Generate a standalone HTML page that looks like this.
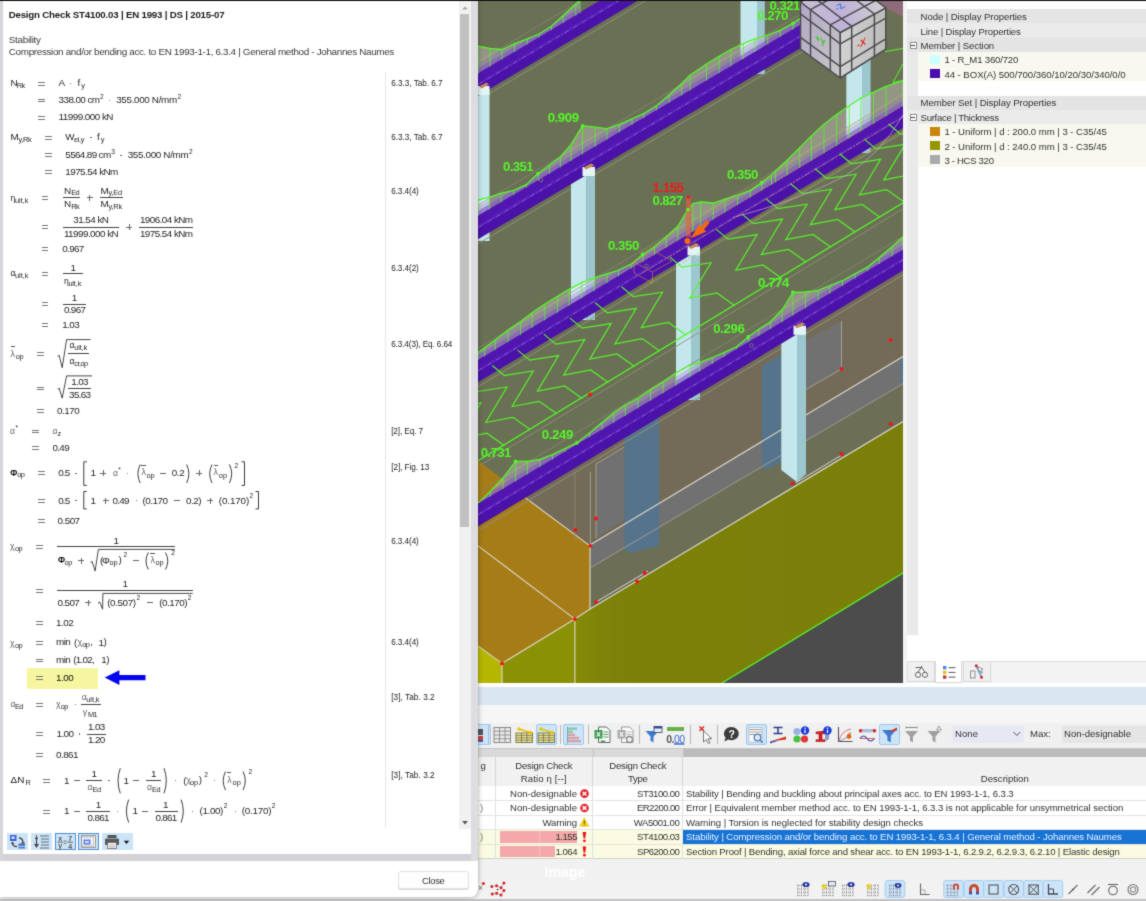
<!DOCTYPE html>
<html><head><meta charset="utf-8"><title>RFEM</title>
<style>
html,body{margin:0;padding:0;}
body{width:1146px;height:901px;overflow:hidden;position:relative;background:#f3f3f3;font-family:"Liberation Sans",sans-serif;}
#all{position:absolute;left:0;top:0;width:1146px;height:901px;overflow:hidden;filter:url(#softblur);}
.t{position:absolute;white-space:pre;line-height:1;font-family:"Liberation Sans",sans-serif;}
.r{position:absolute;}
svg{position:absolute;overflow:hidden;}
svg text{font-family:"Liberation Sans",sans-serif;}
</style></head><body><svg width="0" height="0" style="position:absolute"><defs><filter id="softblur" x="0" y="0" width="100%" height="100%" color-interpolation-filters="sRGB"><feConvolveMatrix order="3" kernelMatrix="0.025 0.085 0.025 0.085 0.56 0.085 0.025 0.085 0.025" edgeMode="duplicate" preserveAlpha="true"/></filter></defs></svg><div id="all">
<!-- view3d -->
<svg class="r" style="left:0;top:0" width="1146" height="901" viewBox="0 0 1146 901"><defs><linearGradient id="gol" x1="0" y1="0" x2="1" y2="0"><stop offset="0" stop-color="#858a07"/><stop offset="0.12" stop-color="#7c810a"/><stop offset="1" stop-color="#7a7f0a"/></linearGradient><linearGradient id="gcl" x1="0" y1="0" x2="1" y2="1"><stop offset="0" stop-color="#b3a7c8"/><stop offset="0.55" stop-color="#bdb8c6"/><stop offset="1" stop-color="#c9c9c9"/></linearGradient><linearGradient id="gcr" x1="0" y1="0" x2="1" y2="0"><stop offset="0" stop-color="#d2d2d2"/><stop offset="1" stop-color="#bcbcbc"/></linearGradient><linearGradient id="gct" x1="0" y1="0" x2="1" y2="0"><stop offset="0" stop-color="#c6c0d2"/><stop offset="0.5" stop-color="#bfb2d8"/><stop offset="1" stop-color="#d2d2d2"/></linearGradient><clipPath id="cv"><rect x="478" y="1" width="425" height="682"/></clipPath></defs><g clip-path="url(#cv)"><rect x="478" y="0" width="425" height="683" fill="#6a7054"/><polygon points="519.0,494.0 903.0,262.0 903.0,430.0 590.0,612.0 590.0,546.0" fill="#736b58" /><polygon points="590.0,545.0 903.0,356.5 903.0,383.7 690.0,509.0 590.0,568.0" fill="#717171" /><polygon points="590.0,568.0 690.0,509.0 903.0,383.7 903.0,421.6 590.0,609.0" fill="#6c6e56" /><polygon points="806.0,340.0 841.5,321.0 841.5,369.0 806.0,389.5" fill="#717171" /><polygon points="596.0,464.0 624.0,447.0 624.0,520.0 596.0,538.0" fill="#717171" /><polygon points="762.0,366.0 781.0,355.0 781.0,462.0 766.0,470.0 762.0,466.0" fill="#55748b" /><polygon points="624.4,432.0 659.3,411.0 659.3,546.0 629.0,553.0 624.4,549.0" fill="#55748b" /><polygon points="900.5,359.0 903.0,358.0 903.0,383.0 900.5,384.0" fill="#55748b" /><polygon points="478.0,460.4 502.0,478.8 519.5,493.4 590.0,545.9 590.0,609.0 574.9,619.1 502.0,663.4 478.0,645.9" fill="#a67c17" /><polygon points="478.0,645.9 502.0,663.4 502.0,683.0 478.0,683.0" fill="#b4b600" /><polygon points="502.0,663.4 574.9,619.1 574.9,683.0 502.0,683.0" fill="#8b9105" /><polygon points="574.9,619.1 590.0,609.0 903.0,421.6 903.0,573.0 722.0,683.0 574.9,683.0" fill="url(#gol)" /><polygon points="722.0,683.0 903.0,573.0 903.0,683.0" fill="#4c4c4c" /><line x1="722.0" y1="683.0" x2="903.0" y2="573.0" stroke="#55f52a" stroke-width="1.20" /><line x1="478.0" y1="545.9" x2="574.9" y2="619.1" stroke="#dad6c8" stroke-width="1.15" /><line x1="502.0" y1="663.4" x2="502.0" y2="683.0" stroke="#dad6c8" stroke-width="1.15" /><line x1="574.9" y1="619.1" x2="574.9" y2="683.0" stroke="#dad6c8" stroke-width="1.15" /><polyline points="478.0,645.9 502.0,663.4 574.9,619.1 590.0,609.0 903.0,421.6" fill="none" stroke="#dad6c8" stroke-width="1.15" /><line x1="590.0" y1="545.9" x2="590.0" y2="609.0" stroke="#dad6c8" stroke-width="1.15" /><line x1="519.5" y1="493.4" x2="590.0" y2="545.9" stroke="#dad6c8" stroke-width="1.15" /><line x1="590.0" y1="545.0" x2="903.0" y2="356.5" stroke="#dad6c8" stroke-width="1.15" /><line x1="590.0" y1="568.0" x2="690.0" y2="509.0" stroke="#a8a8a0" stroke-width="0.80" /><line x1="690.0" y1="509.0" x2="903.0" y2="383.7" stroke="#a8a8a0" stroke-width="0.80" /><line x1="574.9" y1="472.0" x2="574.9" y2="540.0" stroke="#908a7a" stroke-width="0.80" /><line x1="590.4" y1="472.0" x2="590.4" y2="546.0" stroke="#b0aca0" stroke-width="0.80" /><polyline points="806.0,389.5 841.5,369.0 841.5,321.0" fill="none" stroke="#b0aca0" stroke-width="0.80" /><polyline points="596.0,538.0 596.0,464.0 624.0,447.0" fill="none" stroke="#b0aca0" stroke-width="0.80" /><line x1="596.0" y1="602.0" x2="648.0" y2="571.0" stroke="#dad6c8" stroke-width="1.00" /><line x1="796.0" y1="482.7" x2="842.4" y2="454.6" stroke="#dad6c8" stroke-width="1.00" /><polygon points="740.5,0.0 757.0,0.0 757.0,74.0 740.5,74.0" fill="#c3e7ec" /><polygon points="757.0,0.0 764.8,0.0 764.8,74.0 757.0,74.0" fill="#9cc7cf" /><polygon points="470.0,78.1 645.0,-26.2 645.0,-3.6 470.0,100.7" fill="#4a12a8" /><polygon points="470.0,78.1 645.0,-26.2 645.0,-17.6 470.0,86.7" fill="#5216b0" /><polygon points="470.0,86.7 645.0,-17.6 645.0,-13.8 470.0,90.5" fill="#581cb8" /><line x1="470.0" y1="89.4" x2="645.0" y2="-14.9" stroke="#b9a6e6" stroke-width="0.70" stroke-dasharray="5 2 1 2" opacity="0.7"/><line x1="470.0" y1="105.2" x2="645.0" y2="0.9" stroke="#8f917c" stroke-width="1.00" /><line x1="470.0" y1="66.7" x2="645.0" y2="-37.6" stroke="#83866e" stroke-width="0.90" /><polygon points="478.0,46.1 490.0,48.3 502.0,49.5 514.7,43.7 527.3,38.8 539.0,34.0 551.5,26.2 563.2,15.5 575.8,3.9 580.0,0.0 580.0,12.5 575.8,15.0 563.2,22.5 551.5,29.5 539.0,36.9 527.3,43.9 514.7,51.4 502.0,59.0 490.0,66.1 478.0,73.3" fill="#ffffff" opacity="0.27"/><polygon points="478.0,64.3 490.0,57.1 502.0,50.0 514.7,43.7 527.3,38.8 539.0,34.0 551.5,26.2 563.2,15.5 575.8,6.0 580.0,3.5 580.0,12.5 575.8,15.0 563.2,22.5 551.5,29.5 539.0,36.9 527.3,43.9 514.7,51.4 502.0,59.0 490.0,66.1 478.0,73.3" fill="#9070c8" opacity="0.32"/><polygon points="478.0,68.8 490.0,61.6 502.0,54.5 514.7,46.9 527.3,39.4 539.0,34.0 551.5,26.2 563.2,18.0 575.8,10.5 580.0,8.0 580.0,12.5 575.8,15.0 563.2,22.5 551.5,29.5 539.0,36.9 527.3,43.9 514.7,51.4 502.0,59.0 490.0,66.1 478.0,73.3" fill="#7e56c0" opacity="0.60"/><polyline points="478.0,46.1 490.0,48.3 502.0,49.5 514.7,43.7 527.3,38.8 539.0,34.0 551.5,26.2 563.2,15.5 575.8,3.9 580.0,0.0" fill="none" stroke="#55f52a" stroke-width="1.30" /><line x1="478.0" y1="46.1" x2="478.0" y2="73.8" stroke="#55f52a" stroke-width="1.00" opacity="0.8"/><line x1="490.0" y1="48.3" x2="490.0" y2="66.6" stroke="#55f52a" stroke-width="1.00" opacity="0.8"/><line x1="502.0" y1="49.5" x2="502.0" y2="59.5" stroke="#55f52a" stroke-width="1.00" opacity="0.8"/><line x1="514.7" y1="43.7" x2="514.7" y2="51.9" stroke="#55f52a" stroke-width="1.00" opacity="0.8"/><line x1="527.3" y1="38.8" x2="527.3" y2="44.4" stroke="#55f52a" stroke-width="1.00" opacity="0.8"/><line x1="539.0" y1="34.0" x2="539.0" y2="37.4" stroke="#55f52a" stroke-width="1.00" opacity="0.8"/><line x1="551.5" y1="26.2" x2="551.5" y2="30.0" stroke="#55f52a" stroke-width="1.00" opacity="0.8"/><line x1="563.2" y1="15.5" x2="563.2" y2="23.0" stroke="#55f52a" stroke-width="1.00" opacity="0.8"/><line x1="575.8" y1="3.9" x2="575.8" y2="15.5" stroke="#55f52a" stroke-width="1.00" opacity="0.8"/><line x1="580.0" y1="0.0" x2="580.0" y2="13.0" stroke="#55f52a" stroke-width="1.00" opacity="0.8"/><polygon points="478.0,95.9 489.5,89.0 489.5,241.0 478.0,241.0" fill="#c3e7ec" /><rect x="478.0" y="86.0" width="11.5" height="9.0" fill="#e2f4f6"/><polygon points="479.0,86.5 486.5,82.5 489.0,84.5 481.5,88.5" fill="#c98a55" /><polygon points="846.3,20.0 862.0,20.0 862.0,153.0 846.3,153.0" fill="#c3e7ec" /><polygon points="862.0,20.0 870.6,20.0 870.6,153.0 862.0,153.0" fill="#9cc7cf" /><polygon points="470.0,220.3 810.0,18.9 810.0,42.6 470.0,244.0" fill="#4a12a8" /><polygon points="470.0,220.3 810.0,18.9 810.0,27.9 470.0,229.3" fill="#5216b0" /><polygon points="470.0,229.3 810.0,27.9 810.0,31.9 470.0,233.4" fill="#581cb8" /><line x1="470.0" y1="232.2" x2="810.0" y2="30.7" stroke="#b9a6e6" stroke-width="0.70" stroke-dasharray="5 2 1 2" opacity="0.7"/><line x1="470.0" y1="248.5" x2="810.0" y2="47.1" stroke="#8f917c" stroke-width="1.00" /><line x1="470.0" y1="210.0" x2="810.0" y2="8.6" stroke="#83866e" stroke-width="0.90" /><polygon points="478.0,200.0 489.4,197.2 501.0,193.3 513.7,190.4 526.3,184.6 538.0,173.6 549.6,165.0 560.3,156.9 571.0,144.7 582.6,125.8 595.2,127.2 606.9,128.7 619.5,124.3 632.1,118.8 643.8,113.6 656.4,105.8 669.0,95.1 681.7,83.5 690.0,75.3 706.5,64.0 719.1,56.3 730.8,49.5 743.4,43.7 755.0,38.8 767.7,35.0 780.3,30.1 793.0,23.3 800.0,18.4 800.0,24.8 793.0,29.0 780.3,36.5 767.7,44.0 755.0,51.5 743.4,58.4 730.8,65.8 719.1,72.7 706.5,80.2 690.0,90.0 681.7,94.9 669.0,102.4 656.4,109.9 643.8,117.4 632.1,124.3 619.5,131.8 606.9,139.2 595.2,146.2 582.6,153.6 571.0,160.5 560.3,166.8 549.6,173.2 538.0,180.1 526.3,187.0 513.7,194.4 501.0,202.0 489.4,208.8 478.0,215.6" fill="#ffffff" opacity="0.27"/><polygon points="478.0,206.6 489.4,199.8 501.0,193.3 513.7,190.4 526.3,184.6 538.0,173.6 549.6,165.0 560.3,157.8 571.0,151.5 582.6,144.6 595.2,137.2 606.9,130.2 619.5,124.3 632.1,118.8 643.8,113.6 656.4,105.8 669.0,95.1 681.7,85.9 690.0,81.0 706.5,71.2 719.1,63.7 730.8,56.8 743.4,49.4 755.0,42.5 767.7,35.0 780.3,30.1 793.0,23.3 800.0,18.4 800.0,24.8 793.0,29.0 780.3,36.5 767.7,44.0 755.0,51.5 743.4,58.4 730.8,65.8 719.1,72.7 706.5,80.2 690.0,90.0 681.7,94.9 669.0,102.4 656.4,109.9 643.8,117.4 632.1,124.3 619.5,131.8 606.9,139.2 595.2,146.2 582.6,153.6 571.0,160.5 560.3,166.8 549.6,173.2 538.0,180.1 526.3,187.0 513.7,194.4 501.0,202.0 489.4,208.8 478.0,215.6" fill="#9070c8" opacity="0.32"/><polygon points="478.0,211.1 489.4,204.3 501.0,197.5 513.7,190.4 526.3,184.6 538.0,175.6 549.6,168.7 560.3,162.3 571.0,156.0 582.6,149.1 595.2,141.7 606.9,134.7 619.5,127.3 632.1,119.8 643.8,113.6 656.4,105.8 669.0,97.9 681.7,90.4 690.0,85.5 706.5,75.7 719.1,68.2 730.8,61.3 743.4,53.9 755.0,47.0 767.7,39.5 780.3,32.0 793.0,24.5 800.0,20.3 800.0,24.8 793.0,29.0 780.3,36.5 767.7,44.0 755.0,51.5 743.4,58.4 730.8,65.8 719.1,72.7 706.5,80.2 690.0,90.0 681.7,94.9 669.0,102.4 656.4,109.9 643.8,117.4 632.1,124.3 619.5,131.8 606.9,139.2 595.2,146.2 582.6,153.6 571.0,160.5 560.3,166.8 549.6,173.2 538.0,180.1 526.3,187.0 513.7,194.4 501.0,202.0 489.4,208.8 478.0,215.6" fill="#7e56c0" opacity="0.60"/><polyline points="478.0,200.0 489.4,197.2 501.0,193.3 513.7,190.4 526.3,184.6 538.0,173.6 549.6,165.0 560.3,156.9 571.0,144.7 582.6,125.8 595.2,127.2 606.9,128.7 619.5,124.3 632.1,118.8 643.8,113.6 656.4,105.8 669.0,95.1 681.7,83.5 690.0,75.3 706.5,64.0 719.1,56.3 730.8,49.5 743.4,43.7 755.0,38.8 767.7,35.0 780.3,30.1 793.0,23.3 800.0,18.4" fill="none" stroke="#55f52a" stroke-width="1.30" /><line x1="478.0" y1="200.0" x2="478.0" y2="216.1" stroke="#55f52a" stroke-width="1.00" opacity="0.8"/><line x1="489.4" y1="197.2" x2="489.4" y2="209.3" stroke="#55f52a" stroke-width="1.00" opacity="0.8"/><line x1="501.0" y1="193.3" x2="501.0" y2="202.5" stroke="#55f52a" stroke-width="1.00" opacity="0.8"/><line x1="513.7" y1="190.4" x2="513.7" y2="194.9" stroke="#55f52a" stroke-width="1.00" opacity="0.8"/><line x1="526.3" y1="184.6" x2="526.3" y2="187.5" stroke="#55f52a" stroke-width="1.00" opacity="0.8"/><line x1="538.0" y1="173.6" x2="538.0" y2="180.6" stroke="#55f52a" stroke-width="1.00" opacity="0.8"/><line x1="549.6" y1="165.0" x2="549.6" y2="173.7" stroke="#55f52a" stroke-width="1.00" opacity="0.8"/><line x1="560.3" y1="156.9" x2="560.3" y2="167.3" stroke="#55f52a" stroke-width="1.00" opacity="0.8"/><line x1="571.0" y1="144.7" x2="571.0" y2="161.0" stroke="#55f52a" stroke-width="1.00" opacity="0.8"/><line x1="582.6" y1="125.8" x2="582.6" y2="154.1" stroke="#55f52a" stroke-width="1.00" opacity="0.8"/><line x1="595.2" y1="127.2" x2="595.2" y2="146.7" stroke="#55f52a" stroke-width="1.00" opacity="0.8"/><line x1="606.9" y1="128.7" x2="606.9" y2="139.7" stroke="#55f52a" stroke-width="1.00" opacity="0.8"/><line x1="619.5" y1="124.3" x2="619.5" y2="132.3" stroke="#55f52a" stroke-width="1.00" opacity="0.8"/><line x1="632.1" y1="118.8" x2="632.1" y2="124.8" stroke="#55f52a" stroke-width="1.00" opacity="0.8"/><line x1="643.8" y1="113.6" x2="643.8" y2="117.9" stroke="#55f52a" stroke-width="1.00" opacity="0.8"/><line x1="656.4" y1="105.8" x2="656.4" y2="110.4" stroke="#55f52a" stroke-width="1.00" opacity="0.8"/><line x1="669.0" y1="95.1" x2="669.0" y2="102.9" stroke="#55f52a" stroke-width="1.00" opacity="0.8"/><line x1="681.7" y1="83.5" x2="681.7" y2="95.4" stroke="#55f52a" stroke-width="1.00" opacity="0.8"/><line x1="690.0" y1="75.3" x2="690.0" y2="90.5" stroke="#55f52a" stroke-width="1.00" opacity="0.8"/><line x1="706.5" y1="64.0" x2="706.5" y2="80.7" stroke="#55f52a" stroke-width="1.00" opacity="0.8"/><line x1="719.1" y1="56.3" x2="719.1" y2="73.2" stroke="#55f52a" stroke-width="1.00" opacity="0.8"/><line x1="730.8" y1="49.5" x2="730.8" y2="66.3" stroke="#55f52a" stroke-width="1.00" opacity="0.8"/><line x1="743.4" y1="43.7" x2="743.4" y2="58.9" stroke="#55f52a" stroke-width="1.00" opacity="0.8"/><line x1="755.0" y1="38.8" x2="755.0" y2="52.0" stroke="#55f52a" stroke-width="1.00" opacity="0.8"/><line x1="767.7" y1="35.0" x2="767.7" y2="44.5" stroke="#55f52a" stroke-width="1.00" opacity="0.8"/><line x1="780.3" y1="30.1" x2="780.3" y2="37.0" stroke="#55f52a" stroke-width="1.00" opacity="0.8"/><line x1="793.0" y1="23.3" x2="793.0" y2="29.5" stroke="#55f52a" stroke-width="1.00" opacity="0.8"/><line x1="800.0" y1="18.4" x2="800.0" y2="25.3" stroke="#55f52a" stroke-width="1.00" opacity="0.8"/><polygon points="571.0,184.2 586.5,175.0 586.5,320.0 571.0,320.0" fill="#c3e7ec" /><polygon points="586.5,175.0 595.0,170.0 595.0,320.0 586.5,320.0" fill="#9cc7cf" /><rect x="582.5" y="167.0" width="12.5" height="9.0" fill="#e2f4f6"/><polygon points="583.5,167.5 591.0,163.5 594.5,165.5 586.0,169.5" fill="#c98a55" /><polygon points="470.0,364.5 910.0,101.4 910.0,123.9 470.0,387.0" fill="#4a12a8" /><polygon points="470.0,364.5 910.0,101.4 910.0,109.9 470.0,373.0" fill="#5216b0" /><polygon points="470.0,373.0 910.0,109.9 910.0,113.7 470.0,376.9" fill="#581cb8" /><line x1="470.0" y1="375.7" x2="910.0" y2="112.6" stroke="#b9a6e6" stroke-width="0.70" stroke-dasharray="5 2 1 2" opacity="0.7"/><line x1="470.0" y1="391.5" x2="910.0" y2="128.4" stroke="#8f917c" stroke-width="1.00" /><line x1="470.0" y1="353.0" x2="910.0" y2="89.9" stroke="#83866e" stroke-width="0.90" /><polygon points="478.0,352.6 484.6,347.8 495.2,340.0 507.9,330.2 520.5,321.5 532.1,312.7 544.8,304.0 557.4,296.2 569.0,289.4 581.7,282.6 594.3,277.8 606.9,273.9 618.5,270.0 631.2,264.2 642.8,254.5 654.5,246.7 666.1,237.0 677.8,226.3 688.0,209.7 693.0,203.5 700.7,202.0 713.3,203.0 725.0,199.1 737.6,195.2 750.2,190.4 761.8,182.6 771.5,175.0 775.4,170.9 787.1,160.2 799.7,147.6 811.4,135.9 824.0,124.3 836.6,114.6 849.2,105.8 860.9,98.0 873.5,92.2 886.1,86.4 903.0,80.6 903.0,105.6 886.1,115.7 873.5,123.2 860.9,130.7 849.2,137.7 836.6,145.3 824.0,152.8 811.4,160.3 799.7,167.3 787.1,174.9 775.4,181.9 771.5,184.2 761.8,190.0 750.2,196.9 737.6,204.5 725.0,212.0 713.3,219.0 700.7,226.5 693.0,231.1 688.0,234.1 677.8,240.2 666.1,247.2 654.5,254.2 642.8,261.1 631.2,268.1 618.5,275.7 606.9,282.6 594.3,290.2 581.7,297.7 569.0,305.3 557.4,312.2 544.8,319.8 532.1,327.3 520.5,334.3 507.9,341.8 495.2,349.4 484.6,355.8 478.0,359.7" fill="#ffffff" opacity="0.27"/><polygon points="478.0,352.6 484.6,347.8 495.2,340.4 507.9,332.8 520.5,325.3 532.1,318.3 544.8,310.8 557.4,303.2 569.0,296.3 581.7,288.7 594.3,281.2 606.9,273.9 618.5,270.0 631.2,264.2 642.8,254.5 654.5,246.7 666.1,238.2 677.8,231.2 688.0,225.1 693.0,222.1 700.7,217.5 713.3,210.0 725.0,203.0 737.6,195.5 750.2,190.4 761.8,182.6 771.5,175.2 775.4,172.9 787.1,165.9 799.7,158.3 811.4,151.3 824.0,143.8 836.6,136.3 849.2,128.7 860.9,121.7 873.5,114.2 886.1,106.7 903.0,96.6 903.0,105.6 886.1,115.7 873.5,123.2 860.9,130.7 849.2,137.7 836.6,145.3 824.0,152.8 811.4,160.3 799.7,167.3 787.1,174.9 775.4,181.9 771.5,184.2 761.8,190.0 750.2,196.9 737.6,204.5 725.0,212.0 713.3,219.0 700.7,226.5 693.0,231.1 688.0,234.1 677.8,240.2 666.1,247.2 654.5,254.2 642.8,261.1 631.2,268.1 618.5,275.7 606.9,282.6 594.3,290.2 581.7,297.7 569.0,305.3 557.4,312.2 544.8,319.8 532.1,327.3 520.5,334.3 507.9,341.8 495.2,349.4 484.6,355.8 478.0,359.7" fill="#9070c8" opacity="0.32"/><polygon points="478.0,355.2 484.6,351.3 495.2,344.9 507.9,337.3 520.5,329.8 532.1,322.8 544.8,315.3 557.4,307.7 569.0,300.8 581.7,293.2 594.3,285.7 606.9,278.1 618.5,271.2 631.2,264.2 642.8,256.6 654.5,249.7 666.1,242.7 677.8,235.7 688.0,229.6 693.0,226.6 700.7,222.0 713.3,214.5 725.0,207.5 737.6,200.0 750.2,192.4 761.8,185.5 771.5,179.7 775.4,177.4 787.1,170.4 799.7,162.8 811.4,155.8 824.0,148.3 836.6,140.8 849.2,133.2 860.9,126.2 873.5,118.7 886.1,111.2 903.0,101.1 903.0,105.6 886.1,115.7 873.5,123.2 860.9,130.7 849.2,137.7 836.6,145.3 824.0,152.8 811.4,160.3 799.7,167.3 787.1,174.9 775.4,181.9 771.5,184.2 761.8,190.0 750.2,196.9 737.6,204.5 725.0,212.0 713.3,219.0 700.7,226.5 693.0,231.1 688.0,234.1 677.8,240.2 666.1,247.2 654.5,254.2 642.8,261.1 631.2,268.1 618.5,275.7 606.9,282.6 594.3,290.2 581.7,297.7 569.0,305.3 557.4,312.2 544.8,319.8 532.1,327.3 520.5,334.3 507.9,341.8 495.2,349.4 484.6,355.8 478.0,359.7" fill="#7e56c0" opacity="0.60"/><polyline points="478.0,352.6 484.6,347.8 495.2,340.0 507.9,330.2 520.5,321.5 532.1,312.7 544.8,304.0 557.4,296.2 569.0,289.4 581.7,282.6 594.3,277.8 606.9,273.9 618.5,270.0 631.2,264.2 642.8,254.5 654.5,246.7 666.1,237.0 677.8,226.3 688.0,209.7 693.0,203.5 700.7,202.0 713.3,203.0 725.0,199.1 737.6,195.2 750.2,190.4 761.8,182.6 771.5,175.0 775.4,170.9 787.1,160.2 799.7,147.6 811.4,135.9 824.0,124.3 836.6,114.6 849.2,105.8 860.9,98.0 873.5,92.2 886.1,86.4 903.0,80.6" fill="none" stroke="#55f52a" stroke-width="1.30" /><line x1="478.0" y1="352.6" x2="478.0" y2="360.2" stroke="#55f52a" stroke-width="1.00" opacity="0.8"/><line x1="484.6" y1="347.8" x2="484.6" y2="356.3" stroke="#55f52a" stroke-width="1.00" opacity="0.8"/><line x1="495.2" y1="340.0" x2="495.2" y2="349.9" stroke="#55f52a" stroke-width="1.00" opacity="0.8"/><line x1="507.9" y1="330.2" x2="507.9" y2="342.3" stroke="#55f52a" stroke-width="1.00" opacity="0.8"/><line x1="520.5" y1="321.5" x2="520.5" y2="334.8" stroke="#55f52a" stroke-width="1.00" opacity="0.8"/><line x1="532.1" y1="312.7" x2="532.1" y2="327.8" stroke="#55f52a" stroke-width="1.00" opacity="0.8"/><line x1="544.8" y1="304.0" x2="544.8" y2="320.3" stroke="#55f52a" stroke-width="1.00" opacity="0.8"/><line x1="557.4" y1="296.2" x2="557.4" y2="312.7" stroke="#55f52a" stroke-width="1.00" opacity="0.8"/><line x1="569.0" y1="289.4" x2="569.0" y2="305.8" stroke="#55f52a" stroke-width="1.00" opacity="0.8"/><line x1="581.7" y1="282.6" x2="581.7" y2="298.2" stroke="#55f52a" stroke-width="1.00" opacity="0.8"/><line x1="594.3" y1="277.8" x2="594.3" y2="290.7" stroke="#55f52a" stroke-width="1.00" opacity="0.8"/><line x1="606.9" y1="273.9" x2="606.9" y2="283.1" stroke="#55f52a" stroke-width="1.00" opacity="0.8"/><line x1="618.5" y1="270.0" x2="618.5" y2="276.2" stroke="#55f52a" stroke-width="1.00" opacity="0.8"/><line x1="631.2" y1="264.2" x2="631.2" y2="268.6" stroke="#55f52a" stroke-width="1.00" opacity="0.8"/><line x1="642.8" y1="254.5" x2="642.8" y2="261.6" stroke="#55f52a" stroke-width="1.00" opacity="0.8"/><line x1="654.5" y1="246.7" x2="654.5" y2="254.7" stroke="#55f52a" stroke-width="1.00" opacity="0.8"/><line x1="666.1" y1="237.0" x2="666.1" y2="247.7" stroke="#55f52a" stroke-width="1.00" opacity="0.8"/><line x1="677.8" y1="226.3" x2="677.8" y2="240.7" stroke="#55f52a" stroke-width="1.00" opacity="0.8"/><line x1="688.0" y1="209.7" x2="688.0" y2="234.6" stroke="#55f52a" stroke-width="1.00" opacity="0.8"/><line x1="693.0" y1="203.5" x2="693.0" y2="231.6" stroke="#55f52a" stroke-width="1.00" opacity="0.8"/><line x1="700.7" y1="202.0" x2="700.7" y2="227.0" stroke="#55f52a" stroke-width="1.00" opacity="0.8"/><line x1="713.3" y1="203.0" x2="713.3" y2="219.5" stroke="#55f52a" stroke-width="1.00" opacity="0.8"/><line x1="725.0" y1="199.1" x2="725.0" y2="212.5" stroke="#55f52a" stroke-width="1.00" opacity="0.8"/><line x1="737.6" y1="195.2" x2="737.6" y2="205.0" stroke="#55f52a" stroke-width="1.00" opacity="0.8"/><line x1="750.2" y1="190.4" x2="750.2" y2="197.4" stroke="#55f52a" stroke-width="1.00" opacity="0.8"/><line x1="761.8" y1="182.6" x2="761.8" y2="190.5" stroke="#55f52a" stroke-width="1.00" opacity="0.8"/><line x1="771.5" y1="175.0" x2="771.5" y2="184.7" stroke="#55f52a" stroke-width="1.00" opacity="0.8"/><line x1="775.4" y1="170.9" x2="775.4" y2="182.4" stroke="#55f52a" stroke-width="1.00" opacity="0.8"/><line x1="787.1" y1="160.2" x2="787.1" y2="175.4" stroke="#55f52a" stroke-width="1.00" opacity="0.8"/><line x1="799.7" y1="147.6" x2="799.7" y2="167.8" stroke="#55f52a" stroke-width="1.00" opacity="0.8"/><line x1="811.4" y1="135.9" x2="811.4" y2="160.8" stroke="#55f52a" stroke-width="1.00" opacity="0.8"/><line x1="824.0" y1="124.3" x2="824.0" y2="153.3" stroke="#55f52a" stroke-width="1.00" opacity="0.8"/><line x1="836.6" y1="114.6" x2="836.6" y2="145.8" stroke="#55f52a" stroke-width="1.00" opacity="0.8"/><line x1="849.2" y1="105.8" x2="849.2" y2="138.2" stroke="#55f52a" stroke-width="1.00" opacity="0.8"/><line x1="860.9" y1="98.0" x2="860.9" y2="131.2" stroke="#55f52a" stroke-width="1.00" opacity="0.8"/><line x1="873.5" y1="92.2" x2="873.5" y2="123.7" stroke="#55f52a" stroke-width="1.00" opacity="0.8"/><line x1="886.1" y1="86.4" x2="886.1" y2="116.2" stroke="#55f52a" stroke-width="1.00" opacity="0.8"/><line x1="903.0" y1="80.6" x2="903.0" y2="106.1" stroke="#55f52a" stroke-width="1.00" opacity="0.8"/><polygon points="676.0,263.8 691.0,254.8 691.0,400.0 676.0,400.0" fill="#c3e7ec" /><polygon points="691.0,254.8 700.0,249.4 700.0,400.0 691.0,400.0" fill="#9cc7cf" /><rect x="687.5" y="246.4" width="12.5" height="9.0" fill="#e2f4f6"/><polygon points="688.5,246.9 696.0,242.9 699.5,244.9 691.0,248.9" fill="#c98a55" /><polyline points="440.0,397.4 452.0,407.4 481.0,402.9 459.8,438.4 487.0,433.2 504.5,445.7" fill="none" stroke="#55f52a" stroke-width="1.20" opacity="0.95"/><polyline points="466.0,381.5 478.0,391.5 507.0,387.0 485.8,422.5 513.0,417.3 530.5,429.8" fill="none" stroke="#55f52a" stroke-width="1.20" opacity="0.95"/><polyline points="492.3,365.5 504.3,375.5 533.3,371.0 512.1,406.5 539.3,401.3 556.8,413.8" fill="none" stroke="#55f52a" stroke-width="1.20" opacity="0.95"/><polyline points="517.6,350.1 529.6,360.1 558.6,355.6 537.4,391.1 564.6,385.9 582.1,398.4" fill="none" stroke="#55f52a" stroke-width="1.20" opacity="0.95"/><polyline points="543.8,334.1 555.8,344.1 584.8,339.6 563.6,375.1 590.8,369.9 608.3,382.4" fill="none" stroke="#55f52a" stroke-width="1.20" opacity="0.95"/><polyline points="570.0,318.1 582.0,328.1 611.0,323.6 589.8,359.1 617.0,353.9 634.5,366.4" fill="none" stroke="#55f52a" stroke-width="1.20" opacity="0.95"/><polyline points="595.2,302.8 607.2,312.8 636.2,308.3 615.0,343.8 642.2,338.6 659.7,351.1" fill="none" stroke="#55f52a" stroke-width="1.20" opacity="0.95"/><polyline points="621.5,286.7 633.5,296.7 662.5,292.2 641.3,327.7 668.5,322.5 686.0,335.0" fill="none" stroke="#55f52a" stroke-width="1.20" opacity="0.95"/><polyline points="670.0,257.2 682.0,267.2 711.0,262.7 689.8,298.2 717.0,293.0 734.5,305.5" fill="none" stroke="#55f52a" stroke-width="1.20" opacity="0.95"/><polyline points="716.0,229.1 728.0,239.1 757.0,234.6 735.8,270.1 763.0,264.9 780.5,277.4" fill="none" stroke="#55f52a" stroke-width="1.20" opacity="0.95"/><polyline points="741.5,213.6 753.5,223.6 782.5,219.1 761.3,254.6 788.5,249.4 806.0,261.9" fill="none" stroke="#55f52a" stroke-width="1.20" opacity="0.95"/><polyline points="766.0,198.7 778.0,208.7 807.0,204.2 785.8,239.7 813.0,234.5 830.5,247.0" fill="none" stroke="#55f52a" stroke-width="1.20" opacity="0.95"/><polyline points="790.6,183.7 802.6,193.7 831.6,189.2 810.4,224.7 837.6,219.5 855.1,232.0" fill="none" stroke="#55f52a" stroke-width="1.20" opacity="0.95"/><polyline points="815.1,168.7 827.1,178.7 856.1,174.2 834.9,209.7 862.1,204.5 879.6,217.0" fill="none" stroke="#55f52a" stroke-width="1.20" opacity="0.95"/><polyline points="839.6,153.8 851.6,163.8 880.6,159.3 859.4,194.8 886.6,189.6 904.1,202.1" fill="none" stroke="#55f52a" stroke-width="1.20" opacity="0.95"/><polyline points="864.0,138.9 876.0,148.9 905.0,144.4 883.8,179.9 911.0,174.7 928.5,187.2" fill="none" stroke="#55f52a" stroke-width="1.20" opacity="0.95"/><polyline points="888.5,124.0 900.5,134.0 929.5,129.5 908.3,165.0 935.5,159.8 953.0,172.3" fill="none" stroke="#55f52a" stroke-width="1.20" opacity="0.95"/><line x1="470.0" y1="465.5" x2="910.0" y2="198.5" stroke="#55f52a" stroke-width="1.30" /><line x1="470.0" y1="471.5" x2="910.0" y2="204.5" stroke="#8f917c" stroke-width="0.90" /><polyline points="885.0,51.5 903.0,48.5" fill="none" stroke="#55f52a" stroke-width="1.00" /><polyline points="903.0,64.0 893.0,82.5 903.0,80.5" fill="none" stroke="#55f52a" stroke-width="1.00" /><line x1="640.0" y1="253.3" x2="910.0" y2="91.9" stroke="#d8a030" stroke-width="0.70" stroke-dasharray="2 1.5" opacity="0.75"/><line x1="640.0" y1="262.8" x2="910.0" y2="101.4" stroke="#d8a030" stroke-width="0.70" stroke-dasharray="2 1.5" opacity="0.75"/><line x1="640.0" y1="274.3" x2="910.0" y2="112.9" stroke="#d8a030" stroke-width="0.70" stroke-dasharray="2 1.5" opacity="0.75"/><line x1="640.0" y1="288.3" x2="910.0" y2="126.9" stroke="#d8a030" stroke-width="0.70" stroke-dasharray="2 1.5" opacity="0.75"/><polyline points="634.0,262.0 634.0,273.0 652.5,283.0 652.5,272.0 634.0,262.0 653.0,250.5 672.0,261.0 652.5,272.0" fill="none" stroke="#e0a030" stroke-width="0.70" opacity="0.7"/><path d="M732.7 217.6 Q800 200 845 176 Q880 155 903 115" fill="none" stroke="#c8a0c8" stroke-width="0.9" opacity="0.8"/><polygon points="470.0,508.2 910.0,245.2 910.0,266.2 470.0,531.2" fill="#4a12a8" /><polygon points="470.0,508.2 910.0,245.2 910.0,253.2 470.0,516.9" fill="#5216b0" /><polygon points="470.0,516.9 910.0,253.2 910.0,256.7 470.0,520.9" fill="#581cb8" /><line x1="470.0" y1="519.7" x2="910.0" y2="255.7" stroke="#b9a6e6" stroke-width="0.70" stroke-dasharray="5 2 1 2" opacity="0.7"/><line x1="470.0" y1="535.7" x2="910.0" y2="270.7" stroke="#8f917c" stroke-width="1.00" /><line x1="470.0" y1="497.2" x2="910.0" y2="232.2" stroke="#83866e" stroke-width="0.90" /><polygon points="478.0,503.1 490.4,491.5 503.0,477.9 515.6,461.4 527.3,461.4 539.9,459.4 552.5,454.6 565.1,448.7 576.8,442.9 589.4,433.2 602.0,422.5 613.7,412.8 625.3,405.0 638.0,398.3 650.6,389.5 663.2,381.7 675.8,373.0 690.0,365.3 699.7,362.3 712.3,357.5 724.0,352.6 736.6,346.8 748.3,337.0 758.9,329.2 770.6,321.5 782.2,309.8 793.0,292.3 805.5,292.0 818.2,290.4 829.8,285.5 842.4,280.7 855.0,273.9 867.7,267.1 879.3,257.4 892.0,246.7 903.0,237.0 903.0,249.4 892.0,256.0 879.3,263.5 867.7,270.5 855.0,278.1 842.4,285.6 829.8,293.1 818.2,300.1 805.5,307.7 793.0,315.1 782.2,321.6 770.6,328.5 758.9,335.5 748.3,341.8 736.6,348.8 724.0,356.4 712.3,363.4 699.7,370.9 690.0,376.7 675.8,385.2 663.2,392.7 650.6,400.2 638.0,407.8 625.3,415.4 613.7,422.3 602.0,429.3 589.4,436.8 576.8,444.3 565.1,451.3 552.5,458.9 539.9,466.4 527.3,473.9 515.6,480.9 503.0,488.5 490.4,496.0 478.0,503.4" fill="#ffffff" opacity="0.27"/><polygon points="478.0,503.1 490.4,491.5 503.0,479.5 515.6,471.9 527.3,464.9 539.9,459.4 552.5,454.6 565.1,448.7 576.8,442.9 589.4,433.2 602.0,422.5 613.7,413.3 625.3,406.4 638.0,398.8 650.6,391.2 663.2,383.7 675.8,376.2 690.0,367.7 699.7,362.3 712.3,357.5 724.0,352.6 736.6,346.8 748.3,337.0 758.9,329.2 770.6,321.5 782.2,312.6 793.0,306.1 805.5,298.7 818.2,291.1 829.8,285.5 842.4,280.7 855.0,273.9 867.7,267.1 879.3,257.4 892.0,247.0 903.0,240.4 903.0,249.4 892.0,256.0 879.3,263.5 867.7,270.5 855.0,278.1 842.4,285.6 829.8,293.1 818.2,300.1 805.5,307.7 793.0,315.1 782.2,321.6 770.6,328.5 758.9,335.5 748.3,341.8 736.6,348.8 724.0,356.4 712.3,363.4 699.7,370.9 690.0,376.7 675.8,385.2 663.2,392.7 650.6,400.2 638.0,407.8 625.3,415.4 613.7,422.3 602.0,429.3 589.4,436.8 576.8,444.3 565.1,451.3 552.5,458.9 539.9,466.4 527.3,473.9 515.6,480.9 503.0,488.5 490.4,496.0 478.0,503.4" fill="#9070c8" opacity="0.32"/><polygon points="478.0,503.1 490.4,491.5 503.0,484.0 515.6,476.4 527.3,469.4 539.9,461.9 552.5,454.6 565.1,448.7 576.8,442.9 589.4,433.2 602.0,424.8 613.7,417.8 625.3,410.9 638.0,403.3 650.6,395.7 663.2,388.2 675.8,380.7 690.0,372.2 699.7,366.4 712.3,358.9 724.0,352.6 736.6,346.8 748.3,337.3 758.9,331.0 770.6,324.0 782.2,317.1 793.0,310.6 805.5,303.2 818.2,295.6 829.8,288.6 842.4,281.1 855.0,273.9 867.7,267.1 879.3,259.0 892.0,251.5 903.0,244.9 903.0,249.4 892.0,256.0 879.3,263.5 867.7,270.5 855.0,278.1 842.4,285.6 829.8,293.1 818.2,300.1 805.5,307.7 793.0,315.1 782.2,321.6 770.6,328.5 758.9,335.5 748.3,341.8 736.6,348.8 724.0,356.4 712.3,363.4 699.7,370.9 690.0,376.7 675.8,385.2 663.2,392.7 650.6,400.2 638.0,407.8 625.3,415.4 613.7,422.3 602.0,429.3 589.4,436.8 576.8,444.3 565.1,451.3 552.5,458.9 539.9,466.4 527.3,473.9 515.6,480.9 503.0,488.5 490.4,496.0 478.0,503.4" fill="#7e56c0" opacity="0.60"/><polyline points="478.0,503.1 490.4,491.5 503.0,477.9 515.6,461.4 527.3,461.4 539.9,459.4 552.5,454.6 565.1,448.7 576.8,442.9 589.4,433.2 602.0,422.5 613.7,412.8 625.3,405.0 638.0,398.3 650.6,389.5 663.2,381.7 675.8,373.0 690.0,365.3 699.7,362.3 712.3,357.5 724.0,352.6 736.6,346.8 748.3,337.0 758.9,329.2 770.6,321.5 782.2,309.8 793.0,292.3 805.5,292.0 818.2,290.4 829.8,285.5 842.4,280.7 855.0,273.9 867.7,267.1 879.3,257.4 892.0,246.7 903.0,237.0" fill="none" stroke="#55f52a" stroke-width="1.30" /><line x1="490.4" y1="491.5" x2="490.4" y2="496.5" stroke="#55f52a" stroke-width="1.00" opacity="0.8"/><line x1="503.0" y1="477.9" x2="503.0" y2="489.0" stroke="#55f52a" stroke-width="1.00" opacity="0.8"/><line x1="515.6" y1="461.4" x2="515.6" y2="481.4" stroke="#55f52a" stroke-width="1.00" opacity="0.8"/><line x1="527.3" y1="461.4" x2="527.3" y2="474.4" stroke="#55f52a" stroke-width="1.00" opacity="0.8"/><line x1="539.9" y1="459.4" x2="539.9" y2="466.9" stroke="#55f52a" stroke-width="1.00" opacity="0.8"/><line x1="552.5" y1="454.6" x2="552.5" y2="459.4" stroke="#55f52a" stroke-width="1.00" opacity="0.8"/><line x1="565.1" y1="448.7" x2="565.1" y2="451.8" stroke="#55f52a" stroke-width="1.00" opacity="0.8"/><line x1="589.4" y1="433.2" x2="589.4" y2="437.3" stroke="#55f52a" stroke-width="1.00" opacity="0.8"/><line x1="602.0" y1="422.5" x2="602.0" y2="429.8" stroke="#55f52a" stroke-width="1.00" opacity="0.8"/><line x1="613.7" y1="412.8" x2="613.7" y2="422.8" stroke="#55f52a" stroke-width="1.00" opacity="0.8"/><line x1="625.3" y1="405.0" x2="625.3" y2="415.9" stroke="#55f52a" stroke-width="1.00" opacity="0.8"/><line x1="638.0" y1="398.3" x2="638.0" y2="408.3" stroke="#55f52a" stroke-width="1.00" opacity="0.8"/><line x1="650.6" y1="389.5" x2="650.6" y2="400.7" stroke="#55f52a" stroke-width="1.00" opacity="0.8"/><line x1="663.2" y1="381.7" x2="663.2" y2="393.2" stroke="#55f52a" stroke-width="1.00" opacity="0.8"/><line x1="675.8" y1="373.0" x2="675.8" y2="385.7" stroke="#55f52a" stroke-width="1.00" opacity="0.8"/><line x1="690.0" y1="365.3" x2="690.0" y2="377.2" stroke="#55f52a" stroke-width="1.00" opacity="0.8"/><line x1="699.7" y1="362.3" x2="699.7" y2="371.4" stroke="#55f52a" stroke-width="1.00" opacity="0.8"/><line x1="712.3" y1="357.5" x2="712.3" y2="363.9" stroke="#55f52a" stroke-width="1.00" opacity="0.8"/><line x1="724.0" y1="352.6" x2="724.0" y2="356.9" stroke="#55f52a" stroke-width="1.00" opacity="0.8"/><line x1="736.6" y1="346.8" x2="736.6" y2="349.3" stroke="#55f52a" stroke-width="1.00" opacity="0.8"/><line x1="748.3" y1="337.0" x2="748.3" y2="342.3" stroke="#55f52a" stroke-width="1.00" opacity="0.8"/><line x1="758.9" y1="329.2" x2="758.9" y2="336.0" stroke="#55f52a" stroke-width="1.00" opacity="0.8"/><line x1="770.6" y1="321.5" x2="770.6" y2="329.0" stroke="#55f52a" stroke-width="1.00" opacity="0.8"/><line x1="782.2" y1="309.8" x2="782.2" y2="322.1" stroke="#55f52a" stroke-width="1.00" opacity="0.8"/><line x1="793.0" y1="292.3" x2="793.0" y2="315.6" stroke="#55f52a" stroke-width="1.00" opacity="0.8"/><line x1="805.5" y1="292.0" x2="805.5" y2="308.2" stroke="#55f52a" stroke-width="1.00" opacity="0.8"/><line x1="818.2" y1="290.4" x2="818.2" y2="300.6" stroke="#55f52a" stroke-width="1.00" opacity="0.8"/><line x1="829.8" y1="285.5" x2="829.8" y2="293.6" stroke="#55f52a" stroke-width="1.00" opacity="0.8"/><line x1="842.4" y1="280.7" x2="842.4" y2="286.1" stroke="#55f52a" stroke-width="1.00" opacity="0.8"/><line x1="855.0" y1="273.9" x2="855.0" y2="278.6" stroke="#55f52a" stroke-width="1.00" opacity="0.8"/><line x1="867.7" y1="267.1" x2="867.7" y2="271.0" stroke="#55f52a" stroke-width="1.00" opacity="0.8"/><line x1="879.3" y1="257.4" x2="879.3" y2="264.0" stroke="#55f52a" stroke-width="1.00" opacity="0.8"/><line x1="892.0" y1="246.7" x2="892.0" y2="256.5" stroke="#55f52a" stroke-width="1.00" opacity="0.8"/><line x1="903.0" y1="237.0" x2="903.0" y2="249.9" stroke="#55f52a" stroke-width="1.00" opacity="0.8"/><polygon points="781.3,343.7 797.0,334.2 797.0,482.0 781.3,470.0" fill="#c3e7ec" /><polygon points="797.0,334.2 806.0,328.8 806.0,474.0 797.0,482.0" fill="#9cc7cf" /><rect x="793.5" y="325.8" width="12.5" height="9" fill="#e2f4f6"/><polygon points="794.5,326.3 802.0,322.3 805.5,324.3 797.0,328.3" fill="#c98a55" /><circle cx="541.0" cy="180.0" r="1.8" fill="none" stroke="#777" stroke-width="0.9"/><circle cx="646.5" cy="266.0" r="1.8" fill="none" stroke="#777" stroke-width="0.9"/><circle cx="751.5" cy="345.5" r="1.8" fill="none" stroke="#777" stroke-width="0.9"/><rect x="686" y="197" width="5" height="40" fill="#e85a40" opacity="0.65"/><circle cx="688.4" cy="197.2" r="1.6" fill="#f01818"/><circle cx="687.5" cy="241" r="3" fill="#f06a10"/><path d="M690.5 238.5 L699 224.5 L701 227 L706.5 220 L709.5 223 L704 229.5 L706.5 231.5 Z" fill="#f26a12"/><circle cx="582.6" cy="125.8" r="1.9" fill="#55f52a"/><circle cx="538.0" cy="173.6" r="1.9" fill="#55f52a"/><circle cx="793.0" cy="23.3" r="1.9" fill="#55f52a"/><circle cx="642.8" cy="254.5" r="1.9" fill="#55f52a"/><circle cx="761.8" cy="182.6" r="1.9" fill="#55f52a"/><circle cx="688.0" cy="209.7" r="1.9" fill="#55f52a"/><circle cx="793.0" cy="292.3" r="1.9" fill="#55f52a"/><circle cx="748.3" cy="337.0" r="1.9" fill="#55f52a"/><circle cx="576.8" cy="442.9" r="1.9" fill="#55f52a"/><circle cx="515.6" cy="461.4" r="1.9" fill="#55f52a"/><circle cx="590.4" cy="545.8" r="1.9" fill="#f41414"/><circle cx="574.9" cy="619.1" r="1.9" fill="#f41414"/><circle cx="502.0" cy="663.4" r="1.9" fill="#f41414"/><circle cx="596.0" cy="602.0" r="1.9" fill="#f41414"/><circle cx="637.2" cy="581.6" r="1.9" fill="#f41414"/><circle cx="644.8" cy="573.0" r="1.9" fill="#f41414"/><circle cx="792.5" cy="483.6" r="1.9" fill="#f41414"/><circle cx="841.5" cy="454.0" r="1.9" fill="#f41414"/><circle cx="890.8" cy="424.0" r="1.9" fill="#f41414"/><circle cx="841.5" cy="369.0" r="1.9" fill="#f41414"/><circle cx="890.5" cy="340.0" r="1.9" fill="#f41414"/><circle cx="596.0" cy="518.5" r="1.9" fill="#f41414"/><circle cx="575.5" cy="530.0" r="1.9" fill="#f41414"/><circle cx="590.0" cy="394.5" r="1.9" fill="#f41414"/><text x="547.7" y="122.0" font-size="13.2" font-weight="bold" fill="#55f52a" letter-spacing="-0.41">0.909</text><text x="503.0" y="170.5" font-size="13.2" font-weight="bold" fill="#55f52a" letter-spacing="-0.61">0.351</text><text x="769.6" y="9.9" font-size="13.2" font-weight="bold" fill="#55f52a" letter-spacing="-0.59">0.321</text><text x="757.0" y="19.6" font-size="13.2" font-weight="bold" fill="#55f52a" letter-spacing="-0.41">0.270</text><text x="652.5" y="192.4" font-size="13.2" font-weight="bold" fill="#f01818" letter-spacing="-0.39">1.155</text><text x="652.5" y="205.2" font-size="13.2" font-weight="bold" fill="#55f52a" letter-spacing="-0.59">0.827</text><text x="607.9" y="250.2" font-size="13.2" font-weight="bold" fill="#55f52a" letter-spacing="-0.39">0.350</text><text x="726.9" y="178.8" font-size="13.2" font-weight="bold" fill="#55f52a" letter-spacing="-0.39">0.350</text><text x="758.0" y="287.1" font-size="13.2" font-weight="bold" fill="#55f52a" letter-spacing="-0.41">0.774</text><text x="713.3" y="332.8" font-size="13.2" font-weight="bold" fill="#55f52a" letter-spacing="-0.39">0.296</text><text x="541.8" y="438.7" font-size="13.2" font-weight="bold" fill="#55f52a" letter-spacing="-0.39">0.249</text><text x="480.7" y="457.1" font-size="13.2" font-weight="bold" fill="#55f52a" letter-spacing="-0.59">0.731</text><polygon points="865.0,0.0 903.0,0.0 903.0,17.0 885.8,8.0" fill="#8e6b78" /><polygon points="800.5,2.0 840.3,32.5 840.3,78.0 800.5,49.2" fill="url(#gcl)" stroke="#4c4c50" stroke-width="1.5" stroke-linejoin="round"/><line x1="810.5" y1="9.6" x2="810.5" y2="56.4" stroke="#4c4c50" stroke-width="1.50" /><line x1="800.5" y1="13.8" x2="840.3" y2="43.9" stroke="#4c4c50" stroke-width="1.50" /><line x1="830.3" y1="24.9" x2="830.3" y2="70.8" stroke="#4c4c50" stroke-width="1.50" /><line x1="800.5" y1="37.4" x2="840.3" y2="66.6" stroke="#4c4c50" stroke-width="1.50" /><polygon points="840.3,32.5 885.8,7.9 885.8,49.2 840.3,78.0" fill="url(#gcr)" stroke="#4c4c50" stroke-width="1.5" stroke-linejoin="round"/><line x1="851.7" y1="26.4" x2="851.7" y2="70.8" stroke="#4c4c50" stroke-width="1.50" /><line x1="840.3" y1="43.9" x2="885.8" y2="18.2" stroke="#4c4c50" stroke-width="1.50" /><line x1="874.4" y1="14.0" x2="874.4" y2="56.4" stroke="#4c4c50" stroke-width="1.50" /><line x1="840.3" y1="66.6" x2="885.8" y2="38.9" stroke="#4c4c50" stroke-width="1.50" /><polygon points="800.5,2.0 846.0,-22.6 885.8,7.9 840.3,32.5" fill="url(#gct)" stroke="#4c4c50" stroke-width="1.5" stroke-linejoin="round"/><line x1="811.9" y1="-4.2" x2="851.7" y2="26.4" stroke="#4c4c50" stroke-width="1.50" /><line x1="810.5" y1="9.6" x2="856.0" y2="-15.0" stroke="#4c4c50" stroke-width="1.50" /><line x1="834.6" y1="-16.5" x2="874.4" y2="14.0" stroke="#4c4c50" stroke-width="1.50" /><line x1="830.3" y1="24.9" x2="875.8" y2="0.3" stroke="#4c4c50" stroke-width="1.50" /><text transform="matrix(0.8,0.6,0,1,815,40)" font-size="10.5" font-weight="bold" fill="#3cc828">+Y</text><text transform="matrix(0.85,-0.46,0,1,857,49)" font-size="10.5" font-weight="bold" fill="#e03028">-X</text><text transform="matrix(0.75,-0.4,0.7,0.5,838,11)" font-size="11" font-weight="bold" fill="#4a7ae0">-Z</text></g></svg>
<!-- rightpanel -->
<div class="r" style="left:0.00px;top:0.00px;width:1146.00px;height:1.00px;background:#111;"></div>
<div class="r" style="left:903.00px;top:1.00px;width:4.30px;height:682.00px;background:#f3f3f3;"></div>
<div class="r" style="left:907.30px;top:1.00px;width:238.70px;height:660.00px;background:#fff;"></div>
<div class="r" style="left:907.30px;top:9.00px;width:10.50px;height:626.00px;background:#e9e9e9;"></div>
<div class="r" style="left:907.30px;top:8.70px;width:238.70px;height:14.30px;background:#e4e4e4;"></div>
<div class="r" style="left:907.30px;top:23.00px;width:238.70px;height:14.30px;background:#ebebeb;"></div>
<div class="r" style="left:907.30px;top:37.30px;width:238.70px;height:14.30px;background:#e4e4e4;"></div>
<div class="r" style="left:917.80px;top:51.60px;width:228.20px;height:29.40px;background:#f8f8f0;"></div>
<div class="r" style="left:907.30px;top:95.50px;width:238.70px;height:14.30px;background:#e4e4e4;"></div>
<div class="r" style="left:907.30px;top:109.80px;width:238.70px;height:14.30px;background:#ebebeb;"></div>
<div class="r" style="left:917.80px;top:124.10px;width:228.20px;height:43.00px;background:#f8f8f0;"></div>
<span class="t" style="left:920.60px;top:12.27px;font-size:9.60px;color:#333;letter-spacing:-0.096px;">Node | Display Properties</span>
<span class="t" style="left:920.60px;top:26.57px;font-size:9.60px;color:#333;letter-spacing:-0.148px;">Line | Display Properties</span>
<span class="t" style="left:920.60px;top:40.87px;font-size:9.60px;color:#333;letter-spacing:-0.093px;">Member | Section</span>
<span class="t" style="left:944.40px;top:55.17px;font-size:9.60px;color:#333;letter-spacing:-0.193px;">1 - R_M1 360/720</span>
<span class="t" style="left:944.40px;top:69.67px;font-size:9.60px;color:#333;letter-spacing:-0.044px;">44 - BOX(A) 500/700/360/10/20/30/340/0/0</span>
<span class="t" style="left:920.60px;top:98.37px;font-size:9.60px;color:#333;letter-spacing:-0.075px;">Member Set | Display Properties</span>
<span class="t" style="left:920.60px;top:112.87px;font-size:9.60px;color:#333;letter-spacing:-0.303px;">Surface | Thickness</span>
<span class="t" style="left:944.40px;top:127.37px;font-size:9.60px;color:#333;letter-spacing:-0.037px;">1 - Uniform | d : 200.0 mm | 3 - C35/45</span>
<span class="t" style="left:944.40px;top:141.67px;font-size:9.60px;color:#333;letter-spacing:-0.037px;">2 - Uniform | d : 240.0 mm | 3 - C35/45</span>
<span class="t" style="left:944.40px;top:156.07px;font-size:9.60px;color:#333;letter-spacing:-0.321px;">3 - HCS 320</span>
<div class="r" style="left:929.80px;top:54.50px;width:9.80px;height:9.30px;background:#ccffff;"></div>
<div class="r" style="left:929.80px;top:68.70px;width:9.80px;height:9.30px;background:#4a0bb0;"></div>
<div class="r" style="left:929.80px;top:126.60px;width:9.80px;height:9.30px;background:#c8860a;"></div>
<div class="r" style="left:929.80px;top:140.80px;width:9.80px;height:9.30px;background:#969600;"></div>
<div class="r" style="left:929.80px;top:155.00px;width:9.80px;height:9.30px;background:#aaaaaa;"></div>
<div class="r" style="left:909.60px;top:41.60px;width:7.00px;height:7.00px;background:#fff;border:1px solid #8c8c8c;box-sizing:border-box;"></div>
<div class="r" style="left:911.40px;top:44.60px;width:3.50px;height:0.90px;background:#444;"></div>
<div class="r" style="left:909.60px;top:114.00px;width:7.00px;height:7.00px;background:#fff;border:1px solid #8c8c8c;box-sizing:border-box;"></div>
<div class="r" style="left:911.40px;top:117.00px;width:3.50px;height:0.90px;background:#444;"></div>
<div class="r" style="left:903.00px;top:661.00px;width:243.00px;height:22.00px;background:#f3f3f3;"></div>
<div class="r" style="left:907.30px;top:661.00px;width:238.70px;height:1.00px;background:#dcdcdc;"></div>
<div class="r" style="left:907.30px;top:662.00px;width:27.50px;height:20.00px;background:#f0f0f0;border:1px solid #d8d8d8;border-top:none;box-sizing:border-box;"></div>
<div class="r" style="left:934.80px;top:661.00px;width:27.70px;height:22.00px;background:#fff;border:1px solid #d8d8d8;border-top:none;box-sizing:border-box;"></div>
<div class="r" style="left:962.50px;top:662.00px;width:28.50px;height:20.00px;background:#f0f0f0;border:1px solid #d8d8d8;border-top:none;box-sizing:border-box;"></div>
<svg class="r" style="left:903px;top:660px" width="100" height="24" viewBox="903 660 100 24">
<g fill="none" stroke="#666" stroke-width="1">
<path d="M915.5 667.5 l6 0 M921.5 665.8 v2.5"/><circle cx="918" cy="674.8" r="2.6"/><circle cx="925" cy="674.8" r="2.6"/>
<path d="M918 672 l3.5 -5 l3.5 5"/>
</g>
<rect x="943" y="666" width="3.4" height="3.4" fill="#4a8ae8"/><rect x="943" y="670.7" width="3.4" height="3.4" fill="#e8c020"/><rect x="943" y="675.4" width="3.4" height="3.4" fill="#c04040"/>
<path d="M948.5 667.7 h7 M948.5 672.4 h7 M948.5 677.1 h7" stroke="#555" stroke-width="1"/>
<rect x="970.5" y="671" width="4.5" height="7" fill="none" stroke="#888" stroke-width="0.9"/>
<path d="M976.5 666 l5 11" stroke="#6a9ae0" stroke-width="1.8"/><circle cx="976.3" cy="665.8" r="1.5" fill="#e02020"/><circle cx="981.5" cy="677.3" r="1.5" fill="#e02020"/>
<path d="M978 667 l5 2 l-2 1 l1.5 2.5 l-1 .6 l-1.5 -2.5 l-1.5 1.3z" fill="#fff" stroke="#555" stroke-width="0.6"/>
</svg>
<!-- bottom -->
<div class="r" style="left:0.00px;top:683.00px;width:1146.00px;height:3.60px;background:#fefefe;"></div>
<div class="r" style="left:0.00px;top:686.60px;width:1146.00px;height:18.00px;background:#dbe6f3;"></div>
<div class="r" style="left:0.00px;top:704.60px;width:1146.00px;height:18.40px;background:#f6f6f6;"></div>
<div class="r" style="left:0.00px;top:723.00px;width:1146.00px;height:24.50px;background:#f0f0f0;"></div>
<div class="r" style="left:0.00px;top:747.50px;width:1146.00px;height:9.30px;background:#c6c6c6;"></div>
<div class="r" style="left:478.00px;top:748.60px;width:17.00px;height:8.00px;background:#d9d9d9;"></div>
<div class="r" style="left:496.00px;top:748.60px;width:96.00px;height:8.00px;background:#d9d9d9;"></div>
<div class="r" style="left:593.50px;top:748.60px;width:89.00px;height:8.00px;background:#d9d9d9;"></div>
<div class="r" style="left:683.50px;top:748.60px;width:463.00px;height:8.00px;background:#bcbcbc;"></div>
<div class="r" style="left:478.00px;top:756.60px;width:668.00px;height:29.60px;background:#f1f1f1;"></div>
<div class="r" style="left:494.80px;top:748.60px;width:1.00px;height:110.00px;background:#d6d6d6;"></div>
<div class="r" style="left:592.00px;top:748.60px;width:1.00px;height:110.00px;background:#d6d6d6;"></div>
<div class="r" style="left:682.30px;top:748.60px;width:1.00px;height:110.00px;background:#d6d6d6;"></div>
<span class="t" style="left:515.30px;top:761.37px;font-size:9.60px;color:#333;letter-spacing:-0.230px;">Design Check</span>
<span class="t" style="left:520.80px;top:773.67px;font-size:9.60px;color:#333;letter-spacing:0.099px;">Ratio η [--]</span>
<span class="t" style="left:609.30px;top:761.37px;font-size:9.60px;color:#333;letter-spacing:-0.230px;">Design Check</span>
<span class="t" style="left:628.05px;top:773.67px;font-size:9.60px;color:#333;letter-spacing:-0.328px;">Type</span>
<span class="t" style="left:980.80px;top:773.67px;font-size:9.60px;color:#333;letter-spacing:-0.002px;">Description</span>
<span class="t" style="left:480.50px;top:761.37px;font-size:9.60px;color:#333;">g</span>
<div class="r" style="left:478.00px;top:786.20px;width:668.00px;height:43.30px;background:#fff;"></div>
<div class="r" style="left:478.00px;top:829.60px;width:668.00px;height:28.80px;background:#fbfbe2;"></div>
<div class="r" style="left:478.00px;top:800.20px;width:668.00px;height:1.00px;background:#e4e4e4;"></div>
<div class="r" style="left:478.00px;top:814.60px;width:668.00px;height:1.00px;background:#e4e4e4;"></div>
<div class="r" style="left:478.00px;top:829.10px;width:668.00px;height:1.00px;background:#e4e4e4;"></div>
<div class="r" style="left:478.00px;top:843.50px;width:668.00px;height:1.00px;background:#e4e4e4;"></div>
<div class="r" style="left:478.00px;top:857.90px;width:668.00px;height:1.00px;background:#e4e4e4;"></div>
<div class="r" style="left:478.00px;top:858.20px;width:668.00px;height:1.00px;background:#d0d0d0;"></div>
<div class="r" style="left:494.80px;top:786.00px;width:1.00px;height:72.50px;background:#e0e0e0;"></div>
<div class="r" style="left:592.00px;top:786.00px;width:1.00px;height:72.50px;background:#e0e0e0;"></div>
<div class="r" style="left:682.30px;top:786.00px;width:1.00px;height:72.50px;background:#e0e0e0;"></div>
<div class="r" style="left:683.20px;top:830.00px;width:462.80px;height:13.60px;background:#1874d4;"></div>
<div class="r" style="left:499.70px;top:831.30px;width:77.50px;height:11.40px;background:#f4a8a8;"></div>
<div class="r" style="left:538.60px;top:831.30px;width:1.00px;height:11.40px;background:#f7bcbc;"></div>
<div class="r" style="left:499.70px;top:845.70px;width:55.00px;height:11.40px;background:#f4a8a8;"></div>
<div class="r" style="left:538.60px;top:845.70px;width:1.00px;height:11.40px;background:#f7bcbc;"></div>
<span class="t" style="left:510.00px;top:788.87px;font-size:9.60px;color:#333;letter-spacing:-0.018px;">Non-designable</span>
<span class="t" style="left:637.10px;top:788.87px;font-size:9.60px;color:#333;letter-spacing:-0.530px;">ST3100.00</span>
<span class="t" style="left:686.00px;top:788.87px;font-size:9.60px;color:#333;letter-spacing:-0.104px;">Stability | Bending and buckling about principal axes acc. to EN 1993-1-1, 6.3.3</span>
<span class="t" style="left:510.00px;top:803.37px;font-size:9.60px;color:#333;letter-spacing:-0.018px;">Non-designable</span>
<span class="t" style="left:637.10px;top:803.37px;font-size:9.60px;color:#333;letter-spacing:-0.649px;">ER2200.00</span>
<span class="t" style="left:686.00px;top:803.37px;font-size:9.60px;color:#333;letter-spacing:-0.066px;">Error | Equivalent member method acc. to EN 1993-1-1, 6.3.3 is not applicable for unsymmetrical section</span>
<span class="t" style="left:542.50px;top:817.77px;font-size:9.60px;color:#333;letter-spacing:-0.127px;">Warning</span>
<span class="t" style="left:633.80px;top:817.77px;font-size:9.60px;color:#333;letter-spacing:-0.479px;">WA5001.00</span>
<span class="t" style="left:686.00px;top:817.77px;font-size:9.60px;color:#333;letter-spacing:-0.047px;">Warning | Torsion is neglected for stability design checks</span>
<span class="t" style="left:555.50px;top:832.27px;font-size:9.60px;color:#333;letter-spacing:-0.505px;">1.155</span>
<span class="t" style="left:637.10px;top:832.27px;font-size:9.60px;color:#333;letter-spacing:-0.530px;">ST4100.03</span>
<span class="t" style="left:686.00px;top:832.27px;font-size:9.60px;color:#e8f0ff;letter-spacing:-0.087px;">Stability | Compression and/or bending acc. to EN 1993-1-1, 6.3.4 | General method - Johannes Naumes</span>
<span class="t" style="left:555.50px;top:846.67px;font-size:9.60px;color:#333;letter-spacing:-0.505px;">1.064</span>
<span class="t" style="left:637.10px;top:846.67px;font-size:9.60px;color:#333;letter-spacing:-0.590px;">SP6200.00</span>
<span class="t" style="left:686.00px;top:846.67px;font-size:9.60px;color:#333;letter-spacing:-0.163px;">Section Proof | Bending, axial force and shear acc. to EN 1993-1-1, 6.2.9.2, 6.2.9.3, 6.2.10 | Elastic design</span>
<span class="t" style="left:480.00px;top:803.37px;font-size:9.60px;color:#777;">)</span>
<span class="t" style="left:480.00px;top:832.27px;font-size:9.60px;color:#777;">)</span>
<svg class="r" style="left:576px;top:786px" width="18" height="74" viewBox="576 786 18 74">
<circle cx="584.5" cy="793.6" r="4.3" fill="#e81c24"/><path d="M582.6 791.7 l3.8 3.8 M586.4 791.7 l-3.8 3.8" stroke="#fff" stroke-width="1.5"/>
<circle cx="584.5" cy="808" r="4.3" fill="#e81c24"/><path d="M582.6 806.1 l3.8 3.8 M586.4 806.1 l-3.8 3.8" stroke="#fff" stroke-width="1.5"/>
<path d="M584.3 817.8 l4.6 8.4 h-9.2z" fill="#f2d21e" stroke="#e0b800" stroke-width="0.5"/><path d="M584.3 820.7 v3" stroke="#5a4a00" stroke-width="1"/><circle cx="584.3" cy="825" r="0.55" fill="#5a4a00"/>
<path d="M582.6 832 h3.6 l-1 6.4 h-1.6z" fill="#f01018"/><circle cx="584.4" cy="840.8" r="1.4" fill="#f01018"/>
<path d="M582.6 846.4 h3.6 l-1 6.4 h-1.6z" fill="#f01018"/><circle cx="584.4" cy="855.2" r="1.4" fill="#f01018"/>
</svg>
<div class="r" style="left:478.00px;top:859.00px;width:668.00px;height:20.50px;background:#f1f1f1;"></div>
<span class="t" style="left:544.50px;top:864.98px;font-size:14.20px;color:#ffffff;letter-spacing:-0.008px;font-weight:bold;">Image</span>
<div class="r" style="left:0.00px;top:879.50px;width:1146.00px;height:19.50px;background:#f2f2f2;"></div>
<div class="r" style="left:0.00px;top:898.50px;width:1146.00px;height:2.50px;background:#c4c4c8;"></div>
<div class="r" style="left:469.90px;top:724.00px;width:21.00px;height:20.50px;background:#cce4f7;border:1px solid #9ccaf0;box-sizing:border-box;border-radius:2px;"></div>
<div class="r" style="left:535.80px;top:724.00px;width:21.00px;height:20.50px;background:#cce4f7;border:1px solid #9ccaf0;box-sizing:border-box;border-radius:2px;"></div>
<div class="r" style="left:563.40px;top:724.00px;width:21.00px;height:20.50px;background:#cce4f7;border:1px solid #9ccaf0;box-sizing:border-box;border-radius:2px;"></div>
<div class="r" style="left:745.70px;top:724.00px;width:21.00px;height:20.50px;background:#cce4f7;border:1px solid #9ccaf0;box-sizing:border-box;border-radius:2px;"></div>
<div class="r" style="left:879.40px;top:724.00px;width:21.00px;height:20.50px;background:#cce4f7;border:1px solid #9ccaf0;box-sizing:border-box;border-radius:2px;"></div>
<div class="r" style="left:487.80px;top:725.00px;width:1.00px;height:19.00px;background:#b8b8b8;"></div>
<div class="r" style="left:560.00px;top:725.00px;width:1.00px;height:19.00px;background:#b8b8b8;"></div>
<div class="r" style="left:587.80px;top:725.00px;width:1.00px;height:19.00px;background:#b8b8b8;"></div>
<div class="r" style="left:638.50px;top:725.00px;width:1.00px;height:19.00px;background:#b8b8b8;"></div>
<div class="r" style="left:689.60px;top:725.00px;width:1.00px;height:19.00px;background:#b8b8b8;"></div>
<div class="r" style="left:716.90px;top:725.00px;width:1.00px;height:19.00px;background:#b8b8b8;"></div>
<div class="r" style="left:952.30px;top:725.80px;width:71.70px;height:16.80px;background:#e6e9f3;"></div>
<span class="t" style="left:955.00px;top:729.47px;font-size:9.60px;color:#333;letter-spacing:0.012px;">None</span>
<svg class="r" style="left:1012px;top:730px" width="10" height="8"><path d="M1.5 2 L4.8 5.5 L8.1 2" fill="none" stroke="#555" stroke-width="1"/></svg>
<span class="t" style="left:1030.00px;top:729.47px;font-size:9.60px;color:#333;letter-spacing:-0.076px;">Max:</span>
<div class="r" style="left:1061.80px;top:725.80px;width:84.20px;height:16.80px;background:#e5e5e5;"></div>
<span class="t" style="left:1064.00px;top:729.47px;font-size:9.60px;color:#333;letter-spacing:-0.018px;">Non-designable</span>
<svg class="r" style="left:478px;top:720px" width="480" height="30" viewBox="478 720 480 30"><rect x="478" y="729" width="5" height="6" fill="#555"/><rect x="478" y="736" width="5" height="4" fill="#d04030"/><rect x="478" y="740" width="5" height="2" fill="#3060c0"/><rect x="494.0" y="727.5" width="16.5" height="15.0" fill="#e9e9e9" stroke="#8a8a8a" stroke-width="1"/><path d="M494.0 731.2 h16.5" stroke="#8a8a8a" stroke-width="0.9"/><path d="M494.0 735.0 h16.5" stroke="#8a8a8a" stroke-width="0.9"/><path d="M494.0 738.8 h16.5" stroke="#8a8a8a" stroke-width="0.9"/><path d="M499.5 727.5 v15.0" stroke="#8a8a8a" stroke-width="0.9"/><path d="M505.0 727.5 v15.0" stroke="#8a8a8a" stroke-width="0.9"/><rect x="516.0" y="733.0" width="16.5" height="9.5" fill="#f0e68c" stroke="#7a7a5a" stroke-width="1"/><path d="M516.0 735.4 h16.5" stroke="#7a7a5a" stroke-width="0.9"/><path d="M516.0 737.8 h16.5" stroke="#7a7a5a" stroke-width="0.9"/><path d="M516.0 740.1 h16.5" stroke="#7a7a5a" stroke-width="0.9"/><path d="M521.5 733.0 v9.5" stroke="#7a7a5a" stroke-width="0.9"/><path d="M527.0 733.0 v9.5" stroke="#7a7a5a" stroke-width="0.9"/><path d="M519.0 729 l11 3.5" stroke="#e0c000" stroke-width="1.6"/><circle cx="519.0" cy="729" r="1.7" fill="#e8c800"/><circle cx="530.0" cy="732.5" r="1.7" fill="#e8c800"/><rect x="538.0" y="733.0" width="16.5" height="9.5" fill="#f0e68c" stroke="#7a7a5a" stroke-width="1"/><path d="M538.0 735.4 h16.5" stroke="#7a7a5a" stroke-width="0.9"/><path d="M538.0 737.8 h16.5" stroke="#7a7a5a" stroke-width="0.9"/><path d="M538.0 740.1 h16.5" stroke="#7a7a5a" stroke-width="0.9"/><path d="M543.5 733.0 v9.5" stroke="#7a7a5a" stroke-width="0.9"/><path d="M549.0 733.0 v9.5" stroke="#7a7a5a" stroke-width="0.9"/><path d="M541.0 729 l11 3.5" stroke="#e0c000" stroke-width="1.6"/><circle cx="541.0" cy="729" r="1.7" fill="#e8c800"/><circle cx="552.0" cy="732.5" r="1.7" fill="#e8c800"/><rect x="568" y="727.5" width="9" height="2.4" fill="#8cc8b0"/><rect x="568" y="730.6" width="5" height="2.4" fill="#8cc8b0"/><rect x="568" y="733.7" width="7" height="2.4" fill="#d8a0a8"/><rect x="568" y="736.8" width="11" height="2.4" fill="#d8a0a8"/><rect x="568" y="739.9" width="13" height="2.4" fill="#d8a0a8"/><path d="M567.5 726.5 v17" stroke="#7aa" stroke-width="1"/><path d="M598.5 727 h8 l3.5 3.5 v12 h-11.5z" fill="#fafafa" stroke="#666" stroke-width="1"/><rect x="594.5" y="730" width="8" height="8.5" fill="#3c9a50"/><path d="M596.7 732 l3.6 4.6 M600.3 732 l-3.6 4.6" stroke="#fff" stroke-width="1.1"/><path d="M603.5 732 h5 M603.5 734.5 h5 M603.5 737 h5" stroke="#3c9a50" stroke-width="0.9"/><path d="M600 740.5 h6 l-3 2.5z" fill="#3c9a50"/><path d="M621.5 727 h8 l3.5 3.5 v12 h-11.5z" fill="#fafafa" stroke="#999" stroke-width="1"/><rect x="617.5" y="730" width="8" height="8.5" fill="#a8a8a8"/><path d="M619.7 732 l3.6 4.6 M623.3 732 l-3.6 4.6" stroke="#fff" stroke-width="1.1"/><path d="M626.5 732 h5 M626.5 734.5 h5 M626.5 737 h5" stroke="#a8a8a8" stroke-width="0.9"/><circle cx="629.5" cy="739.5" r="3" fill="#f4f4f4" stroke="#888" stroke-width="1.3"/><path d="M645.5 731 h13 l-5 5.5 v6 l-3 -1.8 v-4.2z" fill="#3a7ad0"/><rect x="654" y="726.5" width="8" height="6" fill="#e8eef8" stroke="#345" stroke-width="0.8"/><rect x="654" y="726.5" width="8" height="2" fill="#2a4aa0"/><rect x="667" y="727" width="17" height="4" fill="#6ab04c"/><text x="666.2" y="742.6" font-size="10.5" font-weight="bold" fill="#555" letter-spacing="-0.6">0.</text><text x="674" y="742.6" font-size="10.5" fill="#3a6ad0" letter-spacing="-0.6" text-decoration="underline">00</text><path d="M674.3 743.7 h10" stroke="#3a6ad0" stroke-width="0.8"/><path d="M699.5 726.5 l4.5 4.5 M704 726.5 l-4.5 4.5" stroke="#e02020" stroke-width="1.4"/><path d="M703.5 731 v11 l2.8 -2.5 l2 4 l1.7 -0.8 l-2 -4 h3.8z" fill="#fff" stroke="#666" stroke-width="0.9"/><path d="M731.8 727 a7.3 6.6 0 1 1 -3.5 12.5 l-4 2 l1.3 -3.8 a7.3 6.6 0 0 1 6.2 -10.7z" fill="#3c3c3c"/><text x="728.6" y="738" font-size="10.5" font-weight="bold" fill="#fff">?</text><rect x="749" y="727.5" width="13" height="14.5" fill="#fdfdfd" stroke="#aab" stroke-width="0.6"/><path d="M749.5 729.5 h12 M749.5 732 h12 M749.5 734.5 h12" stroke="#9a9a9a" stroke-width="1.2"/><circle cx="757.5" cy="737.5" r="3.3" fill="#dce8f8" stroke="#5a7ab0" stroke-width="1.3"/><path d="M760 740 l2.8 2.8" stroke="#5a7ab0" stroke-width="1.6"/><path d="M773.5 727.5 h9 M778 727.5 v6 M773.5 733.5 h9" stroke="#2a3a8a" stroke-width="1.5" fill="none"/><path d="M770 741.5 l16 -5 v3z" fill="#d83020"/><path d="M770 741.5 l9 -1 l-9 3z" fill="#2a50c0"/><circle cx="797" cy="731.5" r="3.6" fill="#9ab0e8"/><circle cx="797" cy="739" r="3.6" fill="#4cc040"/><circle cx="804.5" cy="739" r="3.6" fill="#e03838"/><circle cx="805" cy="730.5" r="4.2" fill="#1a3ad8"/><path d="M805 729.8 v3.3" stroke="#fff" stroke-width="1.3"/><circle cx="805" cy="728.2" r="0.8" fill="#fff"/><path d="M816 732 h9 l3 -2 M816 732 v1.8 h3 v6 h-3 v1.8 h9 v-1.8 h-3 v-6 h3 v-1.8" fill="#d82020" stroke="#a01010" stroke-width="0.6"/><path d="M825 741.6 l4 -2.6 v-8 l-4 2.6" fill="#8aa0c8"/><circle cx="827.5" cy="730.5" r="4.2" fill="#1a3ad8"/><path d="M827.5 729.8 v3.3" stroke="#fff" stroke-width="1.3"/><circle cx="827.5" cy="728.2" r="0.8" fill="#fff"/><path d="M838.5 727 v14.5 h14" fill="none" stroke="#555" stroke-width="1.1"/><path d="M839 741 q2 -10 12 -12" fill="none" stroke="#e07080" stroke-width="1"/><path d="M839 741 q8 -2 12 -9" fill="none" stroke="#8090d0" stroke-width="1"/><circle cx="849" cy="736.5" r="2.4" fill="#e86a10"/><path d="M849 732.5 l1.5 2.5 h-3z" fill="#e86a10"/><rect x="860.5" y="729" width="14" height="3.4" fill="#a8c0e0"/><circle cx="860.5" cy="730.7" r="1.7" fill="#e02020"/><circle cx="874.5" cy="730.7" r="1.7" fill="#e02020"/><path d="M860 738.5 q3.5 -5 7 0 t7.5 0" fill="none" stroke="#2a3ab0" stroke-width="1.2"/><path d="M860 738.5 h15" stroke="#d04040" stroke-width="0.8"/><path d="M882 730 h14 l-5.2 6 v6.5 l-3.4 -2 v-4.5z" fill="#3a7ad0"/><path d="M888 732 l9 -4.5 v3z" fill="#d83020"/><path d="M905 731 h13 l-5 5.5 v6 l-3 -1.8 v-4.2z" fill="#a0a0a0"/><path d="M906 727.5 h11" stroke="#888" stroke-width="1"/><path d="M906 726.5 v2 M917 726.5 v2" stroke="#888" stroke-width="0.8"/><path d="M927.5 731 h13 l-5 5.5 v6 l-3 -1.8 v-4.2z" fill="#a0a0a0"/><path d="M939 726 l2.5 4 h-5z" fill="#f0f0f0" stroke="#888" stroke-width="0.8"/></svg>
<svg class="r" style="left:478px;top:878px" width="668" height="22" viewBox="478 878 668 22"><path d="M479 886 l3 3.6 M482 886 l-3 3.6" stroke="#667" stroke-width="0.9"/><circle cx="483.4" cy="883.4" r="1.5" fill="#e02020"/><path d="M491.8 886.6 L496.6 885.7 L501 887.7 L503.9 883.1 M492.3 893.9 L496.6 893.2 L501 894.9 L503.9 890.5 M496.6 885.7 L501 887.7" stroke="#a8b8e0" stroke-width="1" fill="none"/><circle cx="491.8" cy="886.6" r="1.5" fill="#e02020"/><circle cx="496.6" cy="885.7" r="1.5" fill="#e02020"/><circle cx="501.0" cy="887.7" r="1.5" fill="#e02020"/><circle cx="503.9" cy="883.1" r="1.5" fill="#e02020"/><circle cx="503.9" cy="890.5" r="1.5" fill="#e02020"/><circle cx="492.3" cy="893.9" r="1.5" fill="#e02020"/><circle cx="496.6" cy="893.2" r="1.5" fill="#e02020"/><circle cx="501.0" cy="894.9" r="1.5" fill="#e02020"/><circle cx="497.5" cy="889.6" r="0.8" fill="#222"/><path d="M797.0 885.5 h11 M798.0 884.5 v11" stroke="#666" stroke-width="0.7" stroke-dasharray="1 1"/><path d="M797.0 888.9 h11 M801.4 884.5 v11" stroke="#666" stroke-width="0.7" stroke-dasharray="1 1"/><path d="M797.0 892.3 h11 M804.8 884.5 v11" stroke="#666" stroke-width="0.7" stroke-dasharray="1 1"/><path d="M797.0 895.7 h11 M808.2 884.5 v11" stroke="#666" stroke-width="0.7" stroke-dasharray="1 1"/><ellipse cx="806" cy="884.5" rx="3.6" ry="2.6" fill="#2a3aa0"/><circle cx="806" cy="884.5" r="1" fill="#fff"/><path d="M822.0 885.5 h11 M823.0 884.5 v11" stroke="#666" stroke-width="0.7" stroke-dasharray="1 1"/><path d="M822.0 888.9 h11 M826.4 884.5 v11" stroke="#666" stroke-width="0.7" stroke-dasharray="1 1"/><path d="M822.0 892.3 h11 M829.8 884.5 v11" stroke="#666" stroke-width="0.7" stroke-dasharray="1 1"/><path d="M822.0 895.7 h11 M833.2 884.5 v11" stroke="#666" stroke-width="0.7" stroke-dasharray="1 1"/><rect x="828.5" y="881.5" width="7" height="4.5" fill="#e8e8f8" stroke="#345" stroke-width="0.7"/><path d="M824 883 l1 2.2 l2.4 .3 l-1.8 1.6 l.5 2.4 l-2.1 -1.2 l-2.1 1.2 l.5 -2.4 l-1.8 -1.6 l2.4 -.3z" fill="#e8d020"/><path d="M842.0 885.5 h11 M843.0 884.5 v11" stroke="#666" stroke-width="0.7" stroke-dasharray="1 1"/><path d="M842.0 888.9 h11 M846.4 884.5 v11" stroke="#666" stroke-width="0.7" stroke-dasharray="1 1"/><path d="M842.0 892.3 h11 M849.8 884.5 v11" stroke="#666" stroke-width="0.7" stroke-dasharray="1 1"/><path d="M842.0 895.7 h11 M853.2 884.5 v11" stroke="#666" stroke-width="0.7" stroke-dasharray="1 1"/><ellipse cx="851" cy="884.5" rx="3.6" ry="2.6" fill="#2a3aa0"/><circle cx="851" cy="884.5" r="1" fill="#fff"/><path d="M867.0 885.5 h11 M868.0 884.5 v11" stroke="#666" stroke-width="0.7" stroke-dasharray="1 1"/><path d="M867.0 888.9 h11 M871.4 884.5 v11" stroke="#666" stroke-width="0.7" stroke-dasharray="1 1"/><path d="M867.0 892.3 h11 M874.8 884.5 v11" stroke="#666" stroke-width="0.7" stroke-dasharray="1 1"/><path d="M867.0 895.7 h11 M878.2 884.5 v11" stroke="#666" stroke-width="0.7" stroke-dasharray="1 1"/><path d="M869 883 l1 2.2 l2.4 .3 l-1.8 1.6 l.5 2.4 l-2.1 -1.2 l-2.1 1.2 l.5 -2.4 l-1.8 -1.6 l2.4 -.3z" fill="#e8d020"/><rect x="885.2" y="880.5" width="19.5" height="17" rx="2" fill="#cce4f7" stroke="#9ccaf0" stroke-width="0.9"/><path d="M889.0 885.5 h11 M890.0 884.5 v11" stroke="#667" stroke-width="0.7" stroke-dasharray="1 1"/><path d="M889.0 888.9 h11 M893.4 884.5 v11" stroke="#667" stroke-width="0.7" stroke-dasharray="1 1"/><path d="M889.0 892.3 h11 M896.8 884.5 v11" stroke="#667" stroke-width="0.7" stroke-dasharray="1 1"/><path d="M889.0 895.7 h11 M900.2 884.5 v11" stroke="#667" stroke-width="0.7" stroke-dasharray="1 1"/><ellipse cx="898" cy="885.5" rx="3.4" ry="2.4" fill="#2a3aa0"/><circle cx="898" cy="885.5" r="0.9" fill="#fff"/><path d="M920.5 883.5 v11 h9" fill="none" stroke="#666" stroke-width="1.1"/><path d="M920.5 890 h4.5 v4.5" fill="none" stroke="#888" stroke-width="0.7"/><rect x="943.8" y="880.5" width="19.5" height="17" rx="2" fill="#cce4f7" stroke="#9ccaf0" stroke-width="0.9"/><path d="M946.5 885.5 h11 M947.5 884.5 v11" stroke="#667" stroke-width="0.7" stroke-dasharray="1 1"/><path d="M946.5 888.9 h11 M950.9 884.5 v11" stroke="#667" stroke-width="0.7" stroke-dasharray="1 1"/><path d="M946.5 892.3 h11 M954.3 884.5 v11" stroke="#667" stroke-width="0.7" stroke-dasharray="1 1"/><path d="M946.5 895.7 h11 M957.7 884.5 v11" stroke="#667" stroke-width="0.7" stroke-dasharray="1 1"/><path d="M953 886.5 a3 3 0 0 1 6 0 v3 h-1.8 v-3 a1.2 1.2 0 0 0 -2.4 0 v3 h-1.8z" fill="#d04030"/><rect x="964.2" y="880.5" width="19.5" height="17" rx="2" fill="#cce4f7" stroke="#9ccaf0" stroke-width="0.9"/><path d="M969 894 v-5 a5 5 0 0 1 10 0 v5 h-3 v-5 a2 2 0 0 0 -4 0 v5z" fill="#c84830"/><rect x="969" y="892" width="3" height="2.4" fill="#3050c0"/><rect x="976" y="892" width="3" height="2.4" fill="#3050c0"/><rect x="983.8" y="880.5" width="19.5" height="17" rx="2" fill="#cce4f7" stroke="#9ccaf0" stroke-width="0.9"/><rect x="989" y="885" width="9" height="9" fill="none" stroke="#555" stroke-width="1.1"/><rect x="1004.0" y="880.5" width="19.5" height="17" rx="2" fill="#cce4f7" stroke="#9ccaf0" stroke-width="0.9"/><circle cx="1013.7" cy="889.5" r="5" fill="none" stroke="#555" stroke-width="1.1"/><path d="M1010.2 886 l7 7 M1017.2 886 l-7 7" stroke="#555" stroke-width="1"/><rect x="1023.8" y="880.5" width="19.5" height="17" rx="2" fill="#cce4f7" stroke="#9ccaf0" stroke-width="0.9"/><rect x="1029" y="885" width="9.2" height="9.2" fill="none" stroke="#555" stroke-width="1.1"/><path d="M1029 885 l9.2 9.2 M1038.2 885 l-9.2 9.2" stroke="#555" stroke-width="1"/><rect x="1043.2" y="880.5" width="19.5" height="17" rx="2" fill="#cce4f7" stroke="#9ccaf0" stroke-width="0.9"/><path d="M1048.5 884 v10 h9.5" fill="none" stroke="#445" stroke-width="1.3"/><path d="M1048.5 889 h5 v5" fill="none" stroke="#445" stroke-width="1"/><path d="M1068.5 894 l9 -9" stroke="#666" stroke-width="1.1"/><circle cx="1073" cy="889.5" r="1.1" fill="#666"/><path d="M1087.5 893 l8 -8 M1091.5 895 l8 -8" stroke="#666" stroke-width="1.1"/><circle cx="1113" cy="890.5" r="4.3" fill="none" stroke="#666" stroke-width="1.1"/><path d="M1108 884.5 h10" stroke="#666" stroke-width="1.1"/><circle cx="1133" cy="889.5" r="5" fill="none" stroke="#777" stroke-width="1.1"/><circle cx="1133" cy="889.5" r="2.6" fill="none" stroke="#999" stroke-width="1.3"/></svg>
<!-- dialog -->
<div class="r" style="left:0.00px;top:1.00px;width:478.30px;height:896.00px;background:#dcdce1;border-radius:0 0 8px 0;box-shadow:0 0 5px rgba(0,0,0,.35);"></div>
<div class="r" style="left:3.00px;top:1.00px;width:468.00px;height:853.00px;background:#fff;"></div>
<div class="r" style="left:0.00px;top:854.00px;width:471.00px;height:7.00px;background:#d2d2d8;"></div>
<div class="r" style="left:0.00px;top:861.00px;width:478.30px;height:36.00px;background:#fff;border-radius:0 0 8px 0;"></div>
<div class="r" style="left:0.00px;top:1.00px;width:3.00px;height:860.00px;background:#d6d6da;"></div>
<div class="r" style="left:459.00px;top:1.00px;width:12.00px;height:828.00px;background:#f1f1f1;"></div>
<div class="r" style="left:460.00px;top:14.00px;width:9.00px;height:513.20px;background:#c1c1c1;"></div>
<svg class="r" style="left:459px;top:1px" width="12" height="830"><path d="M3.2 8.5 L6 5.5 L8.8 8.5Z" fill="#a3a3a3"/><path d="M3.2 820 L6 823.5 L8.8 820Z" fill="#505050"/></svg>
<div class="r" style="left:398.00px;top:871.00px;width:71.00px;height:18.00px;background:#fdfdfd;border:1px solid #e2e2e2;border-radius:3px;box-sizing:border-box;box-shadow:0 1px 0 #d8d8d8;"></div>
<span class="t" style="left:422.00px;top:876.04px;font-size:9.40px;color:#333;letter-spacing:-0.307px;">Close</span>
<span class="t" style="left:8.70px;top:10.14px;font-size:9.70px;color:#1a1a1a;letter-spacing:-0.201px;font-weight:bold;">Design Check ST4100.03 | EN 1993 | DS | 2015-07</span>
<span class="t" style="left:8.80px;top:34.82px;font-size:9.90px;color:#3a3a3a;letter-spacing:-0.296px;">Stability</span>
<span class="t" style="left:8.80px;top:47.02px;font-size:9.90px;color:#3a3a3a;letter-spacing:-0.337px;">Compression and/or bending acc. to EN 1993-1-1, 6.3.4 | General method - Johannes Naumes</span>
<div class="r" style="left:385.40px;top:72.00px;width:1.00px;height:756.00px;background:#e6e6e6;"></div>
<span class="t" style="left:391.20px;top:79.96px;font-size:8.20px;color:#1c1c1c;letter-spacing:-0.022px;">6.3.3, Tab. 6.7</span>
<span class="t" style="left:391.20px;top:133.96px;font-size:8.20px;color:#1c1c1c;letter-spacing:-0.022px;">6.3.3, Tab. 6.7</span>
<span class="t" style="left:391.20px;top:187.96px;font-size:8.20px;color:#1c1c1c;letter-spacing:-0.083px;">6.3.4(4)</span>
<span class="t" style="left:391.20px;top:264.96px;font-size:8.20px;color:#1c1c1c;letter-spacing:-0.083px;">6.3.4(2)</span>
<span class="t" style="left:391.20px;top:340.96px;font-size:8.20px;color:#1c1c1c;letter-spacing:-0.120px;">6.3.4(3), Eq. 6.64</span>
<span class="t" style="left:391.20px;top:427.66px;font-size:8.20px;color:#1c1c1c;letter-spacing:-0.102px;">[2], Eq. 7</span>
<span class="t" style="left:391.20px;top:464.46px;font-size:8.20px;color:#1c1c1c;letter-spacing:-0.053px;">[2], Fig. 13</span>
<span class="t" style="left:391.20px;top:537.76px;font-size:8.20px;color:#1c1c1c;letter-spacing:-0.083px;">6.3.4(4)</span>
<span class="t" style="left:391.20px;top:638.96px;font-size:8.20px;color:#1c1c1c;letter-spacing:-0.083px;">6.3.4(4)</span>
<span class="t" style="left:391.20px;top:693.96px;font-size:8.20px;color:#1c1c1c;letter-spacing:0.069px;">[3], Tab. 3.2</span>
<span class="t" style="left:391.20px;top:771.66px;font-size:8.20px;color:#1c1c1c;letter-spacing:0.069px;">[3], Tab. 3.2</span>
<span class="t" style="left:10.50px;top:77.82px;font-size:9.90px;color:#262626;">N</span>
<span class="t" style="left:16.80px;top:81.54px;font-size:7.40px;color:#262626;letter-spacing:-0.572px;">Rk</span>
<div class="r" style="left:38.30px;top:81.80px;width:6.60px;height:0.90px;background:#777;"></div>
<div class="r" style="left:38.30px;top:84.70px;width:6.60px;height:0.90px;background:#777;"></div>
<span class="t" style="left:58.60px;top:77.82px;font-size:9.90px;color:#262626;">A</span>
<div class="r" style="left:70.20px;top:83.10px;width:1.30px;height:1.30px;background:#555;border-radius:1px;"></div>
<span class="t" style="left:77.50px;top:77.82px;font-size:9.90px;color:#262626;">f</span>
<span class="t" style="left:81.30px;top:81.74px;font-size:7.40px;color:#262626;">y</span>
<div class="r" style="left:38.30px;top:98.50px;width:6.60px;height:0.90px;background:#777;"></div>
<div class="r" style="left:38.30px;top:101.40px;width:6.60px;height:0.90px;background:#777;"></div>
<span class="t" style="left:58.60px;top:95.32px;font-size:9.90px;color:#262626;letter-spacing:-0.592px;">338.00 cm</span>
<span class="t" style="left:100.10px;top:93.61px;font-size:6.60px;color:#262626;">2</span>
<div class="r" style="left:108.90px;top:99.80px;width:1.30px;height:1.30px;background:#555;border-radius:1px;"></div>
<span class="t" style="left:116.20px;top:95.32px;font-size:9.90px;color:#262626;letter-spacing:-0.344px;">355.000 N/mm</span>
<span class="t" style="left:177.60px;top:93.61px;font-size:6.60px;color:#262626;">2</span>
<div class="r" style="left:38.30px;top:115.70px;width:6.60px;height:0.90px;background:#777;"></div>
<div class="r" style="left:38.30px;top:118.60px;width:6.60px;height:0.90px;background:#777;"></div>
<span class="t" style="left:58.60px;top:111.82px;font-size:9.90px;color:#262626;letter-spacing:-0.535px;">11999.000 kN</span>
<span class="t" style="left:10.50px;top:131.82px;font-size:9.90px;color:#262626;">M</span>
<span class="t" style="left:18.40px;top:135.54px;font-size:7.40px;color:#262626;letter-spacing:-0.313px;">y,Rk</span>
<div class="r" style="left:45.00px;top:135.80px;width:6.60px;height:0.90px;background:#777;"></div>
<div class="r" style="left:45.00px;top:138.70px;width:6.60px;height:0.90px;background:#777;"></div>
<span class="t" style="left:65.30px;top:131.82px;font-size:9.90px;color:#262626;">W</span>
<span class="t" style="left:73.90px;top:135.54px;font-size:7.40px;color:#262626;letter-spacing:-0.304px;">el,y</span>
<div class="r" style="left:90.40px;top:137.10px;width:1.30px;height:1.30px;background:#555;border-radius:1px;"></div>
<span class="t" style="left:97.00px;top:131.82px;font-size:9.90px;color:#262626;">f</span>
<span class="t" style="left:100.70px;top:135.74px;font-size:7.40px;color:#262626;">y</span>
<div class="r" style="left:45.00px;top:153.40px;width:6.60px;height:0.90px;background:#777;"></div>
<div class="r" style="left:45.00px;top:156.30px;width:6.60px;height:0.90px;background:#777;"></div>
<span class="t" style="left:65.30px;top:150.22px;font-size:9.90px;color:#262626;letter-spacing:-0.643px;">5564.89 cm</span>
<span class="t" style="left:111.20px;top:148.61px;font-size:6.60px;color:#262626;">3</span>
<div class="r" style="left:120.40px;top:154.70px;width:1.30px;height:1.30px;background:#555;border-radius:1px;"></div>
<span class="t" style="left:127.70px;top:150.22px;font-size:9.90px;color:#262626;letter-spacing:-0.344px;">355.000 N/mm</span>
<span class="t" style="left:189.00px;top:148.61px;font-size:6.60px;color:#262626;">2</span>
<div class="r" style="left:45.00px;top:169.70px;width:6.60px;height:0.90px;background:#777;"></div>
<div class="r" style="left:45.00px;top:172.60px;width:6.60px;height:0.90px;background:#777;"></div>
<span class="t" style="left:65.30px;top:166.52px;font-size:9.90px;color:#262626;letter-spacing:-0.571px;">1975.54 kNm</span>
<span class="t" style="left:10.50px;top:193.72px;font-size:8.60px;color:#262626;">η</span>
<span class="t" style="left:15.00px;top:196.74px;font-size:7.40px;color:#262626;letter-spacing:-0.054px;">ult,k</span>
<div class="r" style="left:41.90px;top:196.00px;width:6.60px;height:0.90px;background:#777;"></div>
<div class="r" style="left:41.90px;top:198.90px;width:6.60px;height:0.90px;background:#777;"></div>
<div class="r" style="left:62.80px;top:197.15px;width:16.80px;height:0.90px;background:#444;"></div>
<span class="t" style="left:63.90px;top:185.72px;font-size:9.90px;color:#262626;">N</span>
<span class="t" style="left:71.20px;top:189.34px;font-size:7.40px;color:#262626;letter-spacing:-0.526px;">Ed</span>
<span class="t" style="left:63.90px;top:199.32px;font-size:9.90px;color:#262626;">N</span>
<span class="t" style="left:71.20px;top:202.94px;font-size:7.40px;color:#262626;letter-spacing:-0.522px;">Rk</span>
<div class="r" style="left:86.60px;top:197.45px;width:6.00px;height:0.90px;background:#666;"></div>
<div class="r" style="left:89.15px;top:194.90px;width:0.90px;height:6.00px;background:#666;"></div>
<div class="r" style="left:99.50px;top:197.15px;width:23.60px;height:0.90px;background:#444;"></div>
<span class="t" style="left:100.50px;top:185.72px;font-size:9.90px;color:#262626;">M</span>
<span class="t" style="left:108.50px;top:189.34px;font-size:7.40px;color:#262626;letter-spacing:-0.215px;">y,Ed</span>
<span class="t" style="left:100.50px;top:199.32px;font-size:9.90px;color:#262626;">M</span>
<span class="t" style="left:108.50px;top:202.94px;font-size:7.40px;color:#262626;letter-spacing:-0.213px;">y,Rk</span>
<div class="r" style="left:41.90px;top:225.10px;width:6.60px;height:0.90px;background:#777;"></div>
<div class="r" style="left:41.90px;top:228.00px;width:6.60px;height:0.90px;background:#777;"></div>
<div class="r" style="left:62.80px;top:226.55px;width:56.60px;height:0.90px;background:#444;"></div>
<span class="t" style="left:73.30px;top:215.22px;font-size:9.90px;color:#262626;letter-spacing:-0.553px;">31.54 kN</span>
<span class="t" style="left:63.90px;top:229.02px;font-size:9.90px;color:#262626;letter-spacing:-0.543px;">11999.000 kN</span>
<div class="r" style="left:126.20px;top:226.55px;width:6.00px;height:0.90px;background:#666;"></div>
<div class="r" style="left:128.75px;top:224.00px;width:0.90px;height:6.00px;background:#666;"></div>
<div class="r" style="left:138.80px;top:226.55px;width:54.50px;height:0.90px;background:#444;"></div>
<span class="t" style="left:139.90px;top:215.22px;font-size:9.90px;color:#262626;letter-spacing:-0.553px;">1906.04 kNm</span>
<span class="t" style="left:139.90px;top:229.02px;font-size:9.90px;color:#262626;letter-spacing:-0.553px;">1975.54 kNm</span>
<div class="r" style="left:41.90px;top:246.60px;width:6.60px;height:0.90px;background:#777;"></div>
<div class="r" style="left:41.90px;top:249.50px;width:6.60px;height:0.90px;background:#777;"></div>
<span class="t" style="left:62.20px;top:243.72px;font-size:9.90px;color:#262626;letter-spacing:-0.635px;">0.967</span>
<span class="t" style="left:10.50px;top:268.72px;font-size:8.60px;color:#262626;">α</span>
<span class="t" style="left:15.00px;top:271.74px;font-size:7.40px;color:#262626;letter-spacing:-0.054px;">ult,k</span>
<div class="r" style="left:41.90px;top:271.80px;width:6.60px;height:0.90px;background:#777;"></div>
<div class="r" style="left:41.90px;top:274.70px;width:6.60px;height:0.90px;background:#777;"></div>
<div class="r" style="left:62.80px;top:273.25px;width:19.90px;height:0.90px;background:#444;"></div>
<span class="t" style="left:70.40px;top:262.52px;font-size:9.90px;color:#262626;">1</span>
<span class="t" style="left:63.90px;top:276.82px;font-size:8.60px;color:#262626;">η</span>
<span class="t" style="left:68.40px;top:279.74px;font-size:7.40px;color:#262626;letter-spacing:-0.134px;">ult,k</span>
<div class="r" style="left:41.90px;top:301.70px;width:6.60px;height:0.90px;background:#777;"></div>
<div class="r" style="left:41.90px;top:304.60px;width:6.60px;height:0.90px;background:#777;"></div>
<div class="r" style="left:62.80px;top:303.75px;width:23.50px;height:0.90px;background:#444;"></div>
<span class="t" style="left:71.80px;top:292.92px;font-size:9.90px;color:#262626;">1</span>
<span class="t" style="left:63.90px;top:305.42px;font-size:9.90px;color:#262626;letter-spacing:-0.655px;">0.967</span>
<div class="r" style="left:41.90px;top:322.70px;width:6.60px;height:0.90px;background:#777;"></div>
<div class="r" style="left:41.90px;top:325.60px;width:6.60px;height:0.90px;background:#777;"></div>
<span class="t" style="left:62.20px;top:320.12px;font-size:9.90px;color:#262626;letter-spacing:-0.567px;">1.03</span>
<span class="t" style="left:10.50px;top:349.55px;font-size:8.80px;color:#666;">λ</span>
<div class="r" style="left:10.50px;top:345.90px;width:4.00px;height:0.80px;background:#555;"></div>
<span class="t" style="left:15.70px;top:353.04px;font-size:7.40px;color:#262626;letter-spacing:-0.216px;">op</span>
<div class="r" style="left:37.30px;top:352.00px;width:6.60px;height:0.90px;background:#777;"></div>
<div class="r" style="left:37.30px;top:354.90px;width:6.60px;height:0.90px;background:#777;"></div>
<div class="r" style="left:68.10px;top:353.45px;width:21.30px;height:0.90px;background:#444;"></div>
<span class="t" style="left:69.50px;top:341.12px;font-size:8.60px;color:#262626;">α</span>
<span class="t" style="left:74.30px;top:344.04px;font-size:7.40px;color:#262626;letter-spacing:-0.194px;">ult,k</span>
<span class="t" style="left:69.50px;top:357.02px;font-size:8.60px;color:#262626;">α</span>
<span class="t" style="left:74.30px;top:359.94px;font-size:7.40px;color:#262626;letter-spacing:-0.569px;">cr,op</span>
<div class="r" style="left:37.30px;top:386.50px;width:6.60px;height:0.90px;background:#777;"></div>
<div class="r" style="left:37.30px;top:389.40px;width:6.60px;height:0.90px;background:#777;"></div>
<div class="r" style="left:68.10px;top:387.55px;width:23.40px;height:0.90px;background:#444;"></div>
<span class="t" style="left:71.20px;top:376.62px;font-size:9.90px;color:#262626;letter-spacing:-0.617px;">1.03</span>
<span class="t" style="left:69.10px;top:389.62px;font-size:9.90px;color:#262626;letter-spacing:-0.675px;">35.63</span>
<div class="r" style="left:37.30px;top:409.00px;width:6.60px;height:0.90px;background:#777;"></div>
<div class="r" style="left:37.30px;top:411.90px;width:6.60px;height:0.90px;background:#777;"></div>
<span class="t" style="left:57.00px;top:406.02px;font-size:9.90px;color:#262626;letter-spacing:-0.515px;">0.170</span>
<span class="t" style="left:10.00px;top:426.62px;font-size:8.60px;color:#666;">α</span>
<span class="t" style="left:15.50px;top:425.00px;font-size:6.50px;color:#262626;">*</span>
<div class="r" style="left:32.00px;top:429.50px;width:6.60px;height:0.90px;background:#777;"></div>
<div class="r" style="left:32.00px;top:432.40px;width:6.60px;height:0.90px;background:#777;"></div>
<span class="t" style="left:52.40px;top:426.62px;font-size:8.60px;color:#666;">α</span>
<span class="t" style="left:57.60px;top:429.54px;font-size:7.40px;color:#262626;">z</span>
<div class="r" style="left:32.00px;top:446.30px;width:6.60px;height:0.90px;background:#777;"></div>
<div class="r" style="left:32.00px;top:449.20px;width:6.60px;height:0.90px;background:#777;"></div>
<span class="t" style="left:52.40px;top:443.32px;font-size:9.90px;color:#262626;letter-spacing:-0.642px;">0.49</span>
<span class="t" style="left:10.30px;top:468.52px;font-size:8.60px;color:#111;font-weight:bold;">Φ</span>
<span class="t" style="left:17.20px;top:471.34px;font-size:7.40px;color:#262626;letter-spacing:-0.566px;">op</span>
<div class="r" style="left:38.30px;top:471.40px;width:6.60px;height:0.90px;background:#777;"></div>
<div class="r" style="left:38.30px;top:474.30px;width:6.60px;height:0.90px;background:#777;"></div>
<span class="t" style="left:58.20px;top:468.22px;font-size:9.90px;color:#262626;letter-spacing:-0.821px;">0.5</span>
<div class="r" style="left:75.40px;top:472.70px;width:1.30px;height:1.30px;background:#555;border-radius:1px;"></div>
<span class="t" style="left:90.50px;top:468.22px;font-size:9.90px;color:#262626;">1</span>
<div class="r" style="left:100.00px;top:472.85px;width:6.00px;height:0.90px;background:#666;"></div>
<div class="r" style="left:102.55px;top:470.30px;width:0.90px;height:6.00px;background:#666;"></div>
<span class="t" style="left:113.00px;top:468.52px;font-size:8.60px;color:#666;">α</span>
<span class="t" style="left:118.30px;top:466.90px;font-size:6.50px;color:#262626;">*</span>
<div class="r" style="left:127.10px;top:472.70px;width:1.30px;height:1.30px;background:#555;border-radius:1px;"></div>
<span class="t" style="left:141.40px;top:468.35px;font-size:8.80px;color:#666;">λ</span>
<div class="r" style="left:141.40px;top:465.10px;width:4.20px;height:0.80px;background:#555;"></div>
<span class="t" style="left:146.60px;top:471.54px;font-size:7.40px;color:#262626;letter-spacing:-0.266px;">op</span>
<div class="r" style="left:160.40px;top:472.85px;width:6.00px;height:0.90px;background:#666;"></div>
<span class="t" style="left:171.70px;top:468.22px;font-size:9.90px;color:#262626;letter-spacing:-0.388px;">0.2</span>
<div class="r" style="left:196.00px;top:472.85px;width:6.00px;height:0.90px;background:#666;"></div>
<div class="r" style="left:198.55px;top:470.30px;width:0.90px;height:6.00px;background:#666;"></div>
<span class="t" style="left:213.60px;top:468.35px;font-size:8.80px;color:#666;">λ</span>
<div class="r" style="left:213.60px;top:465.10px;width:4.20px;height:0.80px;background:#555;"></div>
<span class="t" style="left:218.80px;top:471.54px;font-size:7.40px;color:#262626;letter-spacing:0.084px;">op</span>
<span class="t" style="left:234.60px;top:462.91px;font-size:6.60px;color:#262626;">2</span>
<div class="r" style="left:38.30px;top:498.60px;width:6.60px;height:0.90px;background:#777;"></div>
<div class="r" style="left:38.30px;top:501.50px;width:6.60px;height:0.90px;background:#777;"></div>
<span class="t" style="left:58.20px;top:495.62px;font-size:9.90px;color:#262626;letter-spacing:-0.821px;">0.5</span>
<div class="r" style="left:75.40px;top:499.90px;width:1.30px;height:1.30px;background:#555;border-radius:1px;"></div>
<span class="t" style="left:90.50px;top:495.62px;font-size:9.90px;color:#262626;">1</span>
<div class="r" style="left:102.80px;top:500.05px;width:6.00px;height:0.90px;background:#666;"></div>
<div class="r" style="left:105.35px;top:497.50px;width:0.90px;height:6.00px;background:#666;"></div>
<span class="t" style="left:112.50px;top:495.62px;font-size:9.90px;color:#262626;letter-spacing:-0.742px;">0.49</span>
<div class="r" style="left:135.50px;top:499.90px;width:1.30px;height:1.30px;background:#555;border-radius:1px;"></div>
<span class="t" style="left:142.40px;top:495.62px;font-size:9.90px;color:#262626;letter-spacing:-0.495px;">(0.170</span>
<div class="r" style="left:174.40px;top:500.05px;width:6.00px;height:0.90px;background:#666;"></div>
<span class="t" style="left:186.00px;top:495.62px;font-size:9.90px;color:#262626;letter-spacing:-0.515px;">0.2)</span>
<div class="r" style="left:207.00px;top:500.05px;width:6.00px;height:0.90px;background:#666;"></div>
<div class="r" style="left:209.55px;top:497.50px;width:0.90px;height:6.00px;background:#666;"></div>
<span class="t" style="left:218.80px;top:495.62px;font-size:9.90px;color:#262626;letter-spacing:-0.138px;">(0.170)</span>
<span class="t" style="left:249.60px;top:492.91px;font-size:6.60px;color:#262626;">2</span>
<div class="r" style="left:38.30px;top:519.00px;width:6.60px;height:0.90px;background:#777;"></div>
<div class="r" style="left:38.30px;top:521.90px;width:6.60px;height:0.90px;background:#777;"></div>
<span class="t" style="left:57.60px;top:516.02px;font-size:9.90px;color:#262626;letter-spacing:-0.555px;">0.507</span>
<span class="t" style="left:10.00px;top:542.35px;font-size:8.80px;color:#666;">χ</span>
<span class="t" style="left:15.00px;top:545.34px;font-size:7.40px;color:#262626;letter-spacing:-0.616px;">op</span>
<div class="r" style="left:36.00px;top:544.70px;width:6.60px;height:0.90px;background:#777;"></div>
<div class="r" style="left:36.00px;top:547.60px;width:6.60px;height:0.90px;background:#777;"></div>
<div class="r" style="left:56.50px;top:546.15px;width:118.40px;height:0.90px;background:#444;"></div>
<span class="t" style="left:113.50px;top:535.52px;font-size:9.90px;color:#262626;">1</span>
<span class="t" style="left:58.00px;top:556.12px;font-size:8.60px;color:#111;font-weight:bold;">Φ</span>
<span class="t" style="left:64.60px;top:558.94px;font-size:7.40px;color:#262626;letter-spacing:-0.466px;">op</span>
<div class="r" style="left:78.30px;top:560.35px;width:6.00px;height:0.90px;background:#666;"></div>
<div class="r" style="left:80.85px;top:557.80px;width:0.90px;height:6.00px;background:#666;"></div>
<span class="t" style="left:100.10px;top:555.82px;font-size:9.90px;color:#111;letter-spacing:-1.398px;">(Φ</span>
<span class="t" style="left:109.50px;top:558.94px;font-size:7.40px;color:#262626;letter-spacing:-0.116px;">op</span>
<span class="t" style="left:118.50px;top:555.02px;font-size:9.90px;color:#262626;">)</span>
<span class="t" style="left:123.60px;top:552.41px;font-size:6.60px;color:#262626;">2</span>
<div class="r" style="left:133.10px;top:560.35px;width:6.00px;height:0.90px;background:#666;"></div>
<span class="t" style="left:150.40px;top:555.95px;font-size:8.80px;color:#666;">λ</span>
<div class="r" style="left:150.40px;top:553.10px;width:4.20px;height:0.80px;background:#555;"></div>
<span class="t" style="left:155.40px;top:559.14px;font-size:7.40px;color:#262626;letter-spacing:-0.116px;">op</span>
<span class="t" style="left:171.30px;top:549.91px;font-size:6.60px;color:#262626;">2</span>
<div class="r" style="left:36.00px;top:588.70px;width:6.60px;height:0.90px;background:#777;"></div>
<div class="r" style="left:36.00px;top:591.60px;width:6.60px;height:0.90px;background:#777;"></div>
<div class="r" style="left:56.50px;top:589.75px;width:136.20px;height:0.90px;background:#444;"></div>
<span class="t" style="left:122.60px;top:578.82px;font-size:9.90px;color:#262626;">1</span>
<span class="t" style="left:57.60px;top:597.72px;font-size:9.90px;color:#262626;letter-spacing:-0.635px;">0.507</span>
<div class="r" style="left:85.00px;top:602.25px;width:6.00px;height:0.90px;background:#666;"></div>
<div class="r" style="left:87.55px;top:599.70px;width:0.90px;height:6.00px;background:#666;"></div>
<span class="t" style="left:107.20px;top:597.72px;font-size:9.90px;color:#262626;letter-spacing:-0.410px;">(0.507)</span>
<span class="t" style="left:136.50px;top:594.91px;font-size:6.60px;color:#262626;">2</span>
<div class="r" style="left:146.70px;top:602.25px;width:6.00px;height:0.90px;background:#666;"></div>
<span class="t" style="left:159.20px;top:597.72px;font-size:9.90px;color:#262626;letter-spacing:-0.510px;">(0.170)</span>
<span class="t" style="left:187.80px;top:594.91px;font-size:6.60px;color:#262626;">2</span>
<div class="r" style="left:36.00px;top:621.20px;width:6.60px;height:0.90px;background:#777;"></div>
<div class="r" style="left:36.00px;top:624.10px;width:6.60px;height:0.90px;background:#777;"></div>
<span class="t" style="left:56.10px;top:618.02px;font-size:9.90px;color:#262626;letter-spacing:-0.517px;">1.02</span>
<span class="t" style="left:10.00px;top:638.75px;font-size:8.80px;color:#666;">χ</span>
<span class="t" style="left:15.00px;top:641.74px;font-size:7.40px;color:#262626;letter-spacing:-0.616px;">op</span>
<div class="r" style="left:36.00px;top:641.10px;width:6.60px;height:0.90px;background:#777;"></div>
<div class="r" style="left:36.00px;top:644.00px;width:6.60px;height:0.90px;background:#777;"></div>
<span class="t" style="left:56.10px;top:636.72px;font-size:9.90px;color:#262626;letter-spacing:-0.618px;">min</span>
<span class="t" style="left:74.00px;top:637.52px;font-size:9.90px;color:#262626;">(</span>
<span class="t" style="left:77.50px;top:638.15px;font-size:8.80px;color:#666;">χ</span>
<span class="t" style="left:82.30px;top:641.14px;font-size:7.40px;color:#262626;letter-spacing:-0.766px;">op</span>
<span class="t" style="left:90.30px;top:636.72px;font-size:9.90px;color:#262626;">,</span>
<span class="t" style="left:98.40px;top:637.52px;font-size:9.90px;color:#262626;">1</span>
<span class="t" style="left:103.40px;top:636.72px;font-size:9.90px;color:#262626;">)</span>
<div class="r" style="left:36.00px;top:658.50px;width:6.60px;height:0.90px;background:#777;"></div>
<div class="r" style="left:36.00px;top:661.40px;width:6.60px;height:0.90px;background:#777;"></div>
<span class="t" style="left:56.10px;top:654.52px;font-size:9.90px;color:#262626;letter-spacing:-0.618px;">min</span>
<span class="t" style="left:73.30px;top:655.32px;font-size:9.90px;color:#262626;letter-spacing:-0.736px;">(1.02,</span>
<span class="t" style="left:101.20px;top:655.32px;font-size:9.90px;color:#262626;letter-spacing:-0.552px;">1)</span>
<div class="r" style="left:26.80px;top:668.20px;width:71.20px;height:20.50px;background:#f6f6a0;"></div>
<div class="r" style="left:36.00px;top:675.70px;width:6.60px;height:0.90px;background:#777;"></div>
<div class="r" style="left:36.00px;top:678.60px;width:6.60px;height:0.90px;background:#777;"></div>
<span class="t" style="left:56.10px;top:672.72px;font-size:9.90px;color:#111;letter-spacing:-0.517px;">1.00</span>
<svg class="r" style="left:100px;top:665px" width="50" height="26"><path d="M4.7 12.6 L19.4 5.2 L19.4 9.9 L45.5 9.9 L45.5 15.3 L19.4 15.3 L19.4 20 Z" fill="#0505f0"/></svg>
<span class="t" style="left:10.50px;top:699.62px;font-size:8.60px;color:#666;">α</span>
<span class="t" style="left:15.00px;top:702.74px;font-size:7.40px;color:#262626;letter-spacing:-0.726px;">Ed</span>
<div class="r" style="left:36.00px;top:702.90px;width:6.60px;height:0.90px;background:#777;"></div>
<div class="r" style="left:36.00px;top:705.80px;width:6.60px;height:0.90px;background:#777;"></div>
<span class="t" style="left:56.10px;top:699.95px;font-size:8.80px;color:#666;">χ</span>
<span class="t" style="left:60.70px;top:702.94px;font-size:7.40px;color:#262626;letter-spacing:-0.466px;">op</span>
<div class="r" style="left:74.80px;top:704.20px;width:1.30px;height:1.30px;background:#555;border-radius:1px;"></div>
<div class="r" style="left:80.60px;top:704.35px;width:20.40px;height:0.90px;background:#444;"></div>
<span class="t" style="left:81.70px;top:693.32px;font-size:8.60px;color:#666;">α</span>
<span class="t" style="left:86.30px;top:696.24px;font-size:7.40px;color:#262626;letter-spacing:-0.074px;">ult,k</span>
<span class="t" style="left:82.70px;top:707.85px;font-size:8.80px;color:#666;">γ</span>
<span class="t" style="left:88.00px;top:710.94px;font-size:7.40px;color:#262626;letter-spacing:-0.740px;">M1</span>
<div class="r" style="left:36.00px;top:732.10px;width:6.60px;height:0.90px;background:#777;"></div>
<div class="r" style="left:36.00px;top:735.00px;width:6.60px;height:0.90px;background:#777;"></div>
<span class="t" style="left:56.50px;top:729.22px;font-size:9.90px;color:#262626;letter-spacing:-0.617px;">1.00</span>
<div class="r" style="left:78.60px;top:733.40px;width:1.30px;height:1.30px;background:#555;border-radius:1px;"></div>
<div class="r" style="left:86.90px;top:733.55px;width:18.90px;height:0.90px;background:#444;"></div>
<span class="t" style="left:88.00px;top:722.42px;font-size:9.90px;color:#262626;letter-spacing:-0.642px;">1.03</span>
<span class="t" style="left:88.00px;top:735.42px;font-size:9.90px;color:#262626;letter-spacing:-0.642px;">1.20</span>
<div class="r" style="left:36.00px;top:753.30px;width:6.60px;height:0.90px;background:#777;"></div>
<div class="r" style="left:36.00px;top:756.20px;width:6.60px;height:0.90px;background:#777;"></div>
<span class="t" style="left:56.10px;top:750.12px;font-size:9.90px;color:#262626;letter-spacing:-0.595px;">0.861</span>
<span class="t" style="left:10.50px;top:774.82px;font-size:9.90px;color:#111;letter-spacing:0.219px;">ΔN</span>
<span class="t" style="left:25.50px;top:778.74px;font-size:7.40px;color:#262626;">R</span>
<div class="r" style="left:43.40px;top:778.80px;width:6.60px;height:0.90px;background:#777;"></div>
<div class="r" style="left:43.40px;top:781.70px;width:6.60px;height:0.90px;background:#777;"></div>
<span class="t" style="left:63.90px;top:775.62px;font-size:9.90px;color:#262626;">1</span>
<div class="r" style="left:73.90px;top:780.25px;width:6.00px;height:0.90px;background:#666;"></div>
<div class="r" style="left:86.30px;top:780.25px;width:15.30px;height:0.90px;background:#444;"></div>
<span class="t" style="left:91.50px;top:769.42px;font-size:9.90px;color:#262626;">1</span>
<span class="t" style="left:87.50px;top:782.92px;font-size:8.60px;color:#666;">α</span>
<span class="t" style="left:92.60px;top:785.94px;font-size:7.40px;color:#262626;letter-spacing:-0.576px;">Ed</span>
<div class="r" style="left:108.30px;top:780.10px;width:1.30px;height:1.30px;background:#555;border-radius:1px;"></div>
<span class="t" style="left:123.60px;top:775.62px;font-size:9.90px;color:#262626;">1</span>
<div class="r" style="left:133.10px;top:780.25px;width:6.00px;height:0.90px;background:#666;"></div>
<div class="r" style="left:146.00px;top:780.25px;width:14.80px;height:0.90px;background:#444;"></div>
<span class="t" style="left:151.00px;top:769.42px;font-size:9.90px;color:#262626;">1</span>
<span class="t" style="left:147.00px;top:782.92px;font-size:8.60px;color:#666;">α</span>
<span class="t" style="left:152.00px;top:785.94px;font-size:7.40px;color:#262626;letter-spacing:-0.526px;">Ed</span>
<div class="r" style="left:174.90px;top:780.10px;width:1.30px;height:1.30px;background:#555;border-radius:1px;"></div>
<span class="t" style="left:183.20px;top:775.62px;font-size:9.90px;color:#262626;">(</span>
<span class="t" style="left:186.30px;top:776.25px;font-size:8.80px;color:#666;">χ</span>
<span class="t" style="left:190.00px;top:779.14px;font-size:7.40px;color:#262626;letter-spacing:-0.166px;">op</span>
<span class="t" style="left:198.80px;top:774.82px;font-size:9.90px;color:#262626;">)</span>
<span class="t" style="left:204.20px;top:771.91px;font-size:6.60px;color:#262626;">2</span>
<div class="r" style="left:214.10px;top:780.10px;width:1.30px;height:1.30px;background:#555;border-radius:1px;"></div>
<span class="t" style="left:227.20px;top:775.75px;font-size:8.80px;color:#666;">λ</span>
<div class="r" style="left:227.20px;top:772.10px;width:4.20px;height:0.80px;background:#555;"></div>
<span class="t" style="left:232.50px;top:778.94px;font-size:7.40px;color:#262626;letter-spacing:0.034px;">op</span>
<span class="t" style="left:248.40px;top:768.91px;font-size:6.60px;color:#262626;">2</span>
<div class="r" style="left:43.40px;top:809.60px;width:6.60px;height:0.90px;background:#777;"></div>
<div class="r" style="left:43.40px;top:812.50px;width:6.60px;height:0.90px;background:#777;"></div>
<span class="t" style="left:63.90px;top:806.42px;font-size:9.90px;color:#262626;">1</span>
<div class="r" style="left:73.90px;top:811.05px;width:6.00px;height:0.90px;background:#666;"></div>
<div class="r" style="left:86.30px;top:811.05px;width:23.70px;height:0.90px;background:#444;"></div>
<span class="t" style="left:95.70px;top:799.92px;font-size:9.90px;color:#262626;">1</span>
<span class="t" style="left:87.50px;top:812.92px;font-size:9.90px;color:#262626;letter-spacing:-0.675px;">0.861</span>
<div class="r" style="left:116.70px;top:810.90px;width:1.30px;height:1.30px;background:#555;border-radius:1px;"></div>
<span class="t" style="left:132.40px;top:806.42px;font-size:9.90px;color:#262626;">1</span>
<div class="r" style="left:141.50px;top:811.05px;width:6.00px;height:0.90px;background:#666;"></div>
<div class="r" style="left:154.60px;top:811.05px;width:23.00px;height:0.90px;background:#444;"></div>
<span class="t" style="left:163.10px;top:799.92px;font-size:9.90px;color:#262626;">1</span>
<span class="t" style="left:155.40px;top:812.92px;font-size:9.90px;color:#262626;letter-spacing:-0.735px;">0.861</span>
<div class="r" style="left:192.10px;top:810.90px;width:1.30px;height:1.30px;background:#555;border-radius:1px;"></div>
<span class="t" style="left:199.60px;top:806.42px;font-size:9.90px;color:#262626;letter-spacing:-0.410px;">(1.00)</span>
<span class="t" style="left:223.70px;top:803.41px;font-size:6.60px;color:#262626;">2</span>
<div class="r" style="left:235.00px;top:810.90px;width:1.30px;height:1.30px;background:#555;border-radius:1px;"></div>
<span class="t" style="left:241.70px;top:806.42px;font-size:9.90px;color:#262626;letter-spacing:-0.238px;">(0.170)</span>
<span class="t" style="left:271.80px;top:803.41px;font-size:6.60px;color:#262626;">2</span>
<svg class="r" style="left:0;top:0" width="478" height="901" viewBox="0 0 478 901"><path d="M57.6 356.4 l1.6 -1 l3 12.3 L66.6 339.6 L90.5 339.6" fill="none" stroke="#333" stroke-width="0.9"/><path d="M57.6 389.2 l1.6 -1 l3 9.9 L66.6 375.9 L92.1 375.9" fill="none" stroke="#333" stroke-width="0.9"/><path d="M86.8 461.8 h-3 V485.4 h3" fill="none" stroke="#333" stroke-width="0.95"/><path d="M140.2 464.5 Q135.6 473.8 140.2 483.0" fill="none" stroke="#333" stroke-width="0.95"/><path d="M186.6 464.5 Q191.2 473.8 186.6 483.0" fill="none" stroke="#333" stroke-width="0.95"/><path d="M212.0 464.5 Q207.4 473.8 212.0 483.0" fill="none" stroke="#333" stroke-width="0.95"/><path d="M229.4 464.5 Q234.0 473.8 229.4 483.0" fill="none" stroke="#333" stroke-width="0.95"/><path d="M241.5 461.8 h3 V485.4 h-3" fill="none" stroke="#333" stroke-width="0.95"/><path d="M86.8 491.5 h-3 V508.9 h3" fill="none" stroke="#333" stroke-width="0.95"/><path d="M255.5 491.5 h3 V508.9 h-3" fill="none" stroke="#333" stroke-width="0.95"/><path d="M90.5 562.4 l1.6 -1 l3 9.6 L98.4 549.4 L174.9 549.4" fill="none" stroke="#333" stroke-width="0.9"/><path d="M148.3 552.5 Q143.7 561.0 148.3 569.5" fill="none" stroke="#333" stroke-width="0.95"/><path d="M165.5 552.5 Q170.1 561.0 165.5 569.5" fill="none" stroke="#333" stroke-width="0.95"/><path d="M98.0 603.0 l1.6 -1 l3 7.2 L102.9 593.4 L192.7 593.4" fill="none" stroke="#333" stroke-width="0.9"/><path d="M120.3 768.2 Q115.7 780.8 120.3 793.3" fill="none" stroke="#333" stroke-width="0.95"/><path d="M164.0 768.2 Q168.6 780.8 164.0 793.3" fill="none" stroke="#333" stroke-width="0.95"/><path d="M225.5 771.5 Q220.9 780.8 225.5 790.0" fill="none" stroke="#333" stroke-width="0.95"/><path d="M243.0 771.5 Q247.6 780.8 243.0 790.0" fill="none" stroke="#333" stroke-width="0.95"/><path d="M128.7 799.6 Q124.1 811.1 128.7 822.6" fill="none" stroke="#333" stroke-width="0.95"/><path d="M181.0 799.6 Q185.6 811.1 181.0 822.6" fill="none" stroke="#333" stroke-width="0.95"/></svg>
<div class="r" style="left:7.00px;top:833.00px;width:21.00px;height:17.00px;background:#cce4f7;"></div>
<div class="r" style="left:31.00px;top:833.00px;width:20.50px;height:17.00px;background:#cce4f7;"></div>
<div class="r" style="left:54.50px;top:833.00px;width:21.00px;height:17.00px;background:#cce4f7;box-sizing:border-box;border:1px solid #4a90d9;"></div>
<div class="r" style="left:78.00px;top:833.00px;width:21.00px;height:17.00px;background:#cce4f7;box-sizing:border-box;border:1px solid #4a90d9;"></div>
<div class="r" style="left:102.30px;top:833.00px;width:30.50px;height:17.00px;background:#cce4f7;"></div>
<svg class="r" style="left:0;top:828px" width="140" height="28" viewBox="0 828 140 28">
<!-- icon1 -->
<rect x="10" y="835" width="6.5" height="6" fill="#3a62d8"/><rect x="11.5" y="836.5" width="3" height="2.5" fill="#dfe8ff"/>
<path d="M19 838 q4 0 4 5" fill="none" stroke="#444" stroke-width="1.3"/><path d="M21 842.5 l2 2.5 l2 -2.5z" fill="#444"/>
<path d="M17 846.5 q-4.5 0 -4.5 -3.5" fill="none" stroke="#444" stroke-width="1.3"/><path d="M10.7 844 l1.8 -2.6 l1.9 2.6z" fill="#444"/>
<rect x="18.5" y="843.5" width="6.5" height="5" fill="#4a78c8"/><rect x="18.5" y="846" width="6.5" height="1" fill="#b8ccee"/>
<!-- icon2 -->
<path d="M36.5 835.5 v10" stroke="#444" stroke-width="1.2"/><path d="M34 844 l2.5 4 l2.5 -4z" fill="#444"/>
<path d="M40 836 h9 M41 839 h8 M41 842 h8 M41 845 h8 M40 848 h9" stroke="#5a6a78" stroke-width="1.1"/>
<path d="M35 838.5 h3" stroke="#444" stroke-width="1"/>
<!-- icon3 -->
<text x="58.3" y="840.6" font-family="Liberation Sans" font-size="7" font-weight="bold" fill="#555">x</text>
<text x="58.3" y="848.2" font-family="Liberation Sans" font-size="7" font-weight="bold" fill="#555">y</text>
<path d="M57.5 842.2 h5.5 M67.5 842.2 h5.5" stroke="#555" stroke-width="0.9"/>
<path d="M63.6 841 h3 M63.6 843.3 h3" stroke="#555" stroke-width="0.8"/>
<text x="68.3" y="840.6" font-family="Liberation Sans" font-size="7" font-weight="bold" fill="#555">7</text>
<text x="68.3" y="848.6" font-family="Liberation Sans" font-size="7" font-weight="bold" fill="#555">4</text>
<!-- icon4 -->
<rect x="81.5" y="835.5" width="14" height="12" fill="#f4f4f4" stroke="#9a9a9a" stroke-width="1"/>
<path d="M82 837 h11 M82 846 h11" stroke="#b0b0b0" stroke-width="1.2"/>
<rect x="83.5" y="839.5" width="7" height="5" fill="#5a7af0"/><rect x="85" y="841" width="4" height="2" fill="#cfe0ff"/>
<path d="M93.5 836 v11" stroke="#c8c8c8" stroke-width="1"/>
<!-- icon5 printer -->
<rect x="107.5" y="835" width="9" height="3" fill="#555"/>
<rect x="105" y="838.5" width="14" height="6.5" rx="1" fill="#5a5a5a"/>
<rect x="107.5" y="842.5" width="9" height="6" fill="#f2f2f2" stroke="#666" stroke-width="0.8"/>
<path d="M109 845 h6 M109 846.8 h6" stroke="#999" stroke-width="0.6"/>
<path d="M123.8 840.8 l2.7 3.2 l2.7 -3.2z" fill="#111"/>
</svg>
</div></body></html>
